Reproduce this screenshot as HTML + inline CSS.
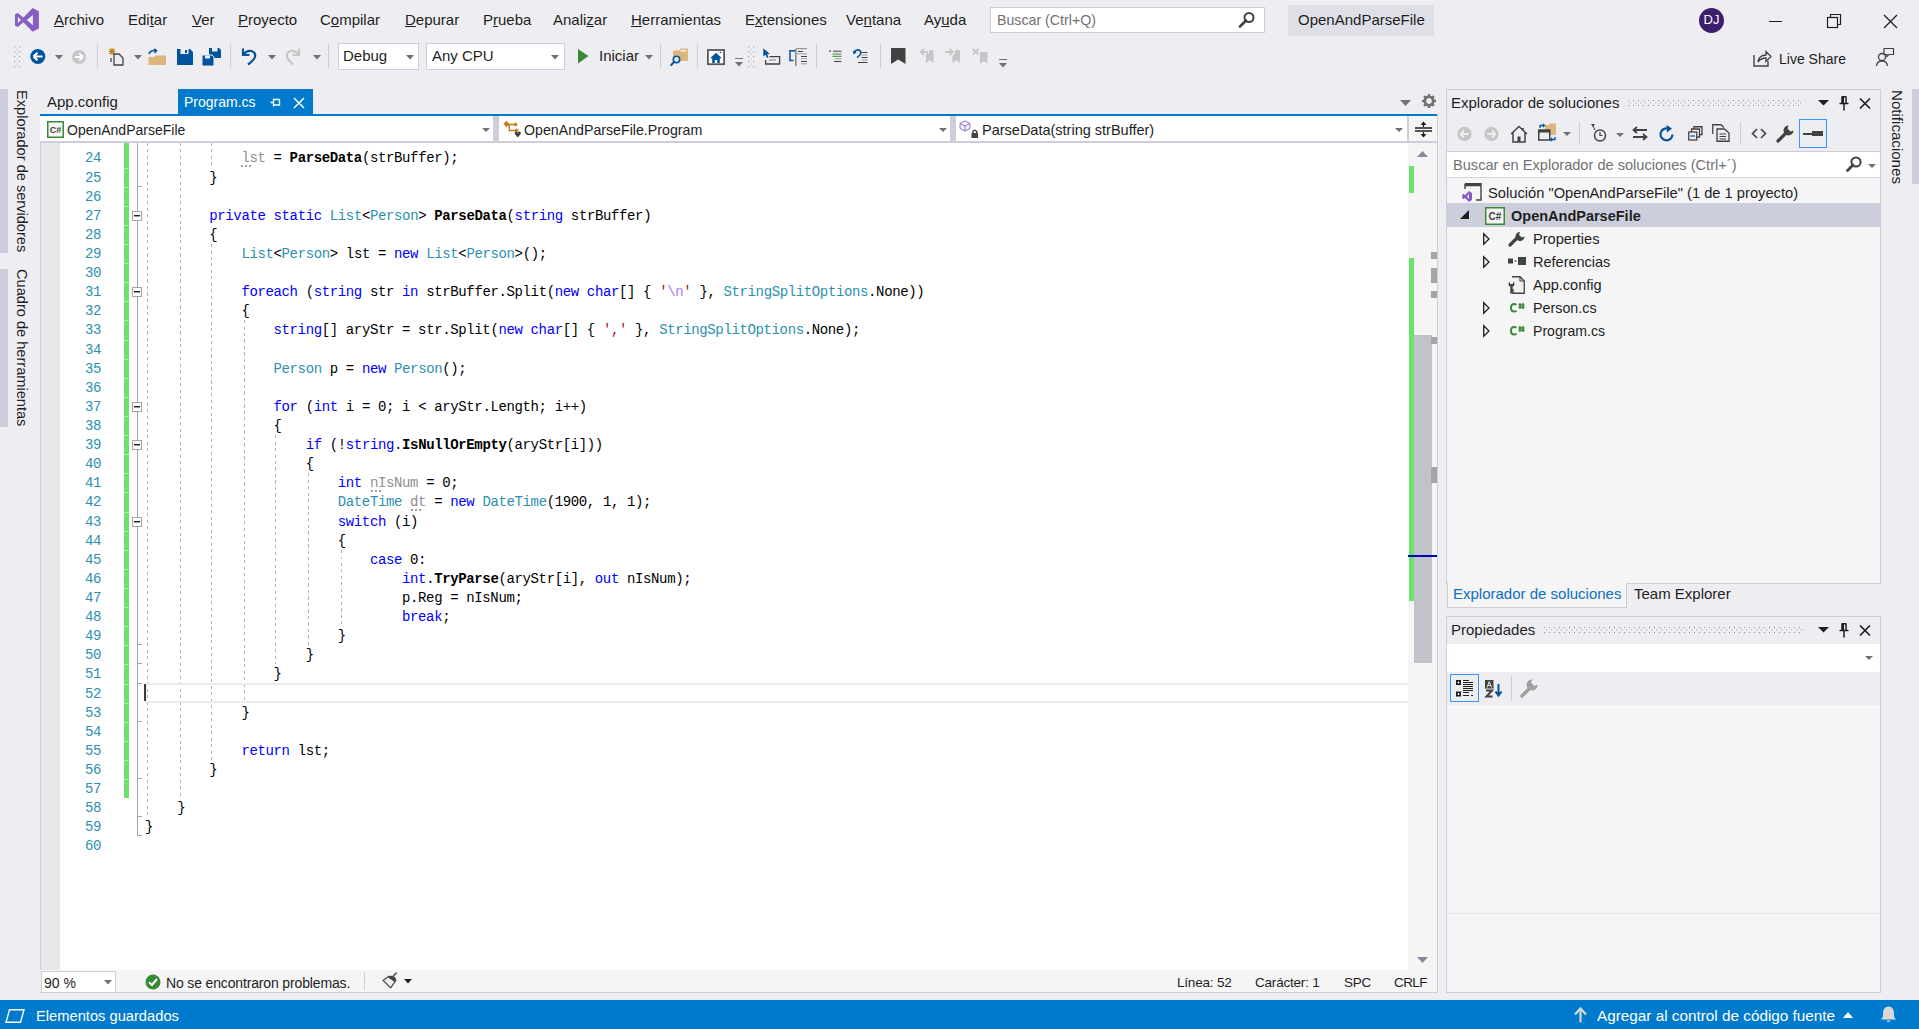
<!DOCTYPE html><html><head><meta charset="utf-8"><style>
html,body{margin:0;padding:0;}
body{width:1919px;height:1029px;overflow:hidden;position:relative;background:#EEEEF2;font-family:"Liberation Sans",sans-serif;}
.t{position:absolute;white-space:nowrap;line-height:20px;}
svg{overflow:visible}
</style></head><body>
<svg style="position:absolute;left:15px;top:8px;" width="25" height="25" viewBox="0 0 25 25"><path d="M0 6.3 L2.8 5 L8.4 9.6 L17.6 0 L23.9 3.3 L23.9 20.6 L17.6 23.7 L8.4 14.3 L2.8 19 L0 17.8 Z M2.9 8.8 L6 11.9 L2.9 15 Z M17.9 6.9 L11.8 11.9 L17.9 17.2 Z" fill="#865FC5" fill-rule="evenodd"/></svg>
<div class="t" style="left:54px;top:10px;font-size:15px;color:#1E1E1E;font-weight:normal;font-family:'Liberation Sans', sans-serif;"><span style="text-decoration:underline;text-underline-offset:1px">A</span>rchivo</div>
<div class="t" style="left:128px;top:10px;font-size:15px;color:#1E1E1E;font-weight:normal;font-family:'Liberation Sans', sans-serif;">Edi<span style="text-decoration:underline;text-underline-offset:1px">t</span>ar</div>
<div class="t" style="left:192px;top:10px;font-size:15px;color:#1E1E1E;font-weight:normal;font-family:'Liberation Sans', sans-serif;"><span style="text-decoration:underline;text-underline-offset:1px">V</span>er</div>
<div class="t" style="left:238px;top:10px;font-size:15px;color:#1E1E1E;font-weight:normal;font-family:'Liberation Sans', sans-serif;"><span style="text-decoration:underline;text-underline-offset:1px">P</span>royecto</div>
<div class="t" style="left:320px;top:10px;font-size:15px;color:#1E1E1E;font-weight:normal;font-family:'Liberation Sans', sans-serif;">C<span style="text-decoration:underline;text-underline-offset:1px">o</span>mpilar</div>
<div class="t" style="left:405px;top:10px;font-size:15px;color:#1E1E1E;font-weight:normal;font-family:'Liberation Sans', sans-serif;"><span style="text-decoration:underline;text-underline-offset:1px">D</span>epurar</div>
<div class="t" style="left:483px;top:10px;font-size:15px;color:#1E1E1E;font-weight:normal;font-family:'Liberation Sans', sans-serif;">P<span style="text-decoration:underline;text-underline-offset:1px">r</span>ueba</div>
<div class="t" style="left:553px;top:10px;font-size:15px;color:#1E1E1E;font-weight:normal;font-family:'Liberation Sans', sans-serif;">Anali<span style="text-decoration:underline;text-underline-offset:1px">z</span>ar</div>
<div class="t" style="left:631px;top:10px;font-size:15px;color:#1E1E1E;font-weight:normal;font-family:'Liberation Sans', sans-serif;"><span style="text-decoration:underline;text-underline-offset:1px">H</span>erramientas</div>
<div class="t" style="left:745px;top:10px;font-size:15px;color:#1E1E1E;font-weight:normal;font-family:'Liberation Sans', sans-serif;">E<span style="text-decoration:underline;text-underline-offset:1px">x</span>tensiones</div>
<div class="t" style="left:846px;top:10px;font-size:15px;color:#1E1E1E;font-weight:normal;font-family:'Liberation Sans', sans-serif;">Ve<span style="text-decoration:underline;text-underline-offset:1px">n</span>tana</div>
<div class="t" style="left:924px;top:10px;font-size:15px;color:#1E1E1E;font-weight:normal;font-family:'Liberation Sans', sans-serif;">Ay<span style="text-decoration:underline;text-underline-offset:1px">u</span>da</div>
<div style="position:absolute;left:990px;top:7px;width:275px;height:26px;background:#fff;border:1px solid #CCCEDB;box-sizing:border-box"></div>
<div class="t" style="left:997px;top:10px;font-size:14.2px;color:#717171;font-weight:normal;font-family:'Liberation Sans', sans-serif;">Buscar (Ctrl+Q)</div>
<svg style="position:absolute;left:1238px;top:11px;" width="18" height="18" viewBox="0 0 18 18"><circle cx="11" cy="6.5" r="4.5" fill="none" stroke="#424242" stroke-width="2"/><path d="M8 9.5 L2 15.5" stroke="#424242" stroke-width="2.6" stroke-linecap="round"/></svg>
<div style="position:absolute;left:1288px;top:5px;width:146px;height:31px;background:#DFE0E7"></div>
<div class="t" style="left:1298px;top:10px;font-size:15px;color:#1E1E1E;font-weight:normal;font-family:'Liberation Sans', sans-serif;">OpenAndParseFile</div>
<div style="position:absolute;left:1699px;top:8px;width:25px;height:25px;background:#3B1E6E;border-radius:50%"></div>
<div class="t" style="left:1702px;top:10px;font-size:13px;color:#FFFFFF;font-weight:normal;font-family:'Liberation Sans', sans-serif;width:19px;text-align:center">DJ</div>
<div style="position:absolute;left:1769px;top:21px;width:13px;height:1px;background:#1E1E1E"></div>
<svg style="position:absolute;left:1826px;top:13px;" width="16" height="16" viewBox="0 0 16 16"><rect x="1.5" y="4.5" width="10" height="10" fill="none" stroke="#1E1E1E" stroke-width="1.2"/><path d="M4.5 4.5 V1.5 H14.5 V11.5 H11.5" fill="none" stroke="#1E1E1E" stroke-width="1.2"/></svg>
<svg style="position:absolute;left:1883px;top:14px;" width="15" height="15" viewBox="0 0 15 15"><path d="M1 1 L14 14 M14 1 L1 14" stroke="#1E1E1E" stroke-width="1.3"/></svg>
<svg style="position:absolute;left:14px;top:46px;" width="7" height="22" viewBox="0 0 7 22"><rect x="0" y="0.0" width="1.2" height="1.2" fill="#A8A8B0"/><rect x="5" y="0.0" width="1.2" height="1.2" fill="#A8A8B0"/><rect x="2.5" y="2.5" width="1.2" height="1.2" fill="#C4C4CC"/><rect x="0" y="5.0" width="1.2" height="1.2" fill="#A8A8B0"/><rect x="5" y="5.0" width="1.2" height="1.2" fill="#A8A8B0"/><rect x="2.5" y="7.5" width="1.2" height="1.2" fill="#C4C4CC"/><rect x="0" y="10.0" width="1.2" height="1.2" fill="#A8A8B0"/><rect x="5" y="10.0" width="1.2" height="1.2" fill="#A8A8B0"/><rect x="2.5" y="12.5" width="1.2" height="1.2" fill="#C4C4CC"/><rect x="0" y="15.0" width="1.2" height="1.2" fill="#A8A8B0"/><rect x="5" y="15.0" width="1.2" height="1.2" fill="#A8A8B0"/><rect x="2.5" y="17.5" width="1.2" height="1.2" fill="#C4C4CC"/><rect x="0" y="20.0" width="1.2" height="1.2" fill="#A8A8B0"/><rect x="5" y="20.0" width="1.2" height="1.2" fill="#A8A8B0"/></svg>
<svg style="position:absolute;left:30px;top:49px;" width="16" height="16" viewBox="0 0 16 16"><circle cx="7.8" cy="7.5" r="7.5" fill="#00539C"/><path d="M3.5 7.5 L7.5 3.8 M3.5 7.5 L7.5 11.2 M3.8 7.5 H12.5" stroke="#fff" stroke-width="2.2" fill="none"/></svg>
<svg style="position:absolute;left:55px;top:55px;" width="8" height="5" viewBox="0 0 8 5"><path d="M0 0 H8 L4 4.5 Z" fill="#717171"/></svg>
<svg style="position:absolute;left:72px;top:50px;" width="15" height="15" viewBox="0 0 15 15"><circle cx="7" cy="7" r="7" fill="#C6C6C6"/><path d="M11 7 L7.3 3.5 M11 7 L7.3 10.5 M10.7 7 H3" stroke="#fff" stroke-width="1.8" fill="none"/></svg>
<div style="position:absolute;left:97px;top:44px;width:1px;height:24px;background:#CCCEDB"></div>
<svg style="position:absolute;left:108px;top:47px;" width="17" height="19" viewBox="0 0 17 19"><path d="M4 1 L4 8 M0.5 4.5 L7.5 4.5 M1.5 2 L6.5 7 M6.5 2 L1.5 7" stroke="#C27D1A" stroke-width="1.2"/><path d="M6 7 H11 L15 11 V18 H6 Z" fill="none" stroke="#424242" stroke-width="1.3"/><path d="M3 11 V15" stroke="#424242" stroke-width="1.3"/></svg>
<svg style="position:absolute;left:134px;top:55px;" width="8" height="5" viewBox="0 0 8 5"><path d="M0 0 H8 L4 4.5 Z" fill="#717171"/></svg>
<svg style="position:absolute;left:148px;top:49px;" width="19" height="17" viewBox="0 0 19 17"><path d="M0.5 8 H6 L7.5 6.5 H18 V16 H0.5 Z" fill="#DCB67A"/><path d="M1 5 Q2 1 8 1.5 M6 0 L8.5 1.7 L6.5 4" stroke="#00539C" stroke-width="1.6" fill="none"/></svg>
<svg style="position:absolute;left:177px;top:49px;" width="16" height="16" viewBox="0 0 16 16"><path d="M0 0 H13 L16 3 V16 H0 Z" fill="#00539C"/><rect x="3.5" y="0" width="8" height="5" fill="#EEEEF2"/><rect x="8" y="1" width="2" height="3" fill="#00539C"/></svg>
<svg style="position:absolute;left:202px;top:48px;" width="19" height="18" viewBox="0 0 19 18"><path d="M7 0 H17 L19 2 V10 H7 Z" fill="#00539C"/><rect x="10" y="0" width="5.5" height="3.5" fill="#EEEEF2"/><path d="M0 7 H10 L12 9 V18 H0 Z" fill="#00539C" stroke="#EEEEF2" stroke-width="1"/><rect x="3" y="7.5" width="5" height="3" fill="#EEEEF2"/></svg>
<div style="position:absolute;left:230px;top:44px;width:1px;height:24px;background:#CCCEDB"></div>
<svg style="position:absolute;left:241px;top:47px;" width="16" height="18" viewBox="0 0 16 18"><path d="M2 1.5 V8 H8.5" fill="none" stroke="#00539C" stroke-width="2.2"/><path d="M2.5 7.5 Q6 3 10.5 4 Q15 5.5 14 10 Q13 13 7 17.5" fill="none" stroke="#00539C" stroke-width="2.2"/></svg>
<svg style="position:absolute;left:268px;top:55px;" width="8" height="5" viewBox="0 0 8 5"><path d="M0 0 H8 L4 4.5 Z" fill="#717171"/></svg>
<svg style="position:absolute;left:285px;top:47px;" width="16" height="18" viewBox="0 0 16 18"><path d="M14 1.5 V8 H7.5" fill="none" stroke="#C6C6C6" stroke-width="2.2"/><path d="M13.5 7.5 Q10 3 5.5 4 Q1 5.5 2 10 Q3 13 8 17.5" fill="none" stroke="#C6C6C6" stroke-width="2.2"/></svg>
<svg style="position:absolute;left:313px;top:55px;" width="8" height="5" viewBox="0 0 8 5"><path d="M0 0 H8 L4 4.5 Z" fill="#717171"/></svg>
<div style="position:absolute;left:328px;top:44px;width:1px;height:24px;background:#CCCEDB"></div>
<div style="position:absolute;left:338px;top:43px;width:81px;height:27px;background:#fff;border:1px solid #CCCEDB;box-sizing:border-box"></div>
<div class="t" style="left:343px;top:46px;font-size:15px;color:#1E1E1E;font-weight:normal;font-family:'Liberation Sans', sans-serif;">Debug</div>
<svg style="position:absolute;left:406px;top:55px;" width="8" height="5" viewBox="0 0 8 5"><path d="M0 0 H8 L4 4.5 Z" fill="#717171"/></svg>
<div style="position:absolute;left:426px;top:43px;width:139px;height:27px;background:#fff;border:1px solid #CCCEDB;box-sizing:border-box"></div>
<div class="t" style="left:432px;top:46px;font-size:15px;color:#1E1E1E;font-weight:normal;font-family:'Liberation Sans', sans-serif;">Any CPU</div>
<svg style="position:absolute;left:551px;top:55px;" width="8" height="5" viewBox="0 0 8 5"><path d="M0 0 H8 L4 4.5 Z" fill="#717171"/></svg>
<svg style="position:absolute;left:578px;top:49px;" width="11" height="15" viewBox="0 0 11 15"><path d="M0 0 L10.5 7 L0 14.5 Z" fill="#388A34"/></svg>
<div class="t" style="left:599px;top:46px;font-size:15px;color:#1E1E1E;font-weight:normal;font-family:'Liberation Sans', sans-serif;">Iniciar</div>
<svg style="position:absolute;left:645px;top:55px;" width="8" height="5" viewBox="0 0 8 5"><path d="M0 0 H8 L4 4.5 Z" fill="#717171"/></svg>
<div style="position:absolute;left:660px;top:44px;width:1px;height:24px;background:#CCCEDB"></div>
<svg style="position:absolute;left:670px;top:48px;" width="19" height="18" viewBox="0 0 19 18"><path d="M3 2.5 H9.5 L10.5 0.5 H17.5 Q18 0.5 18 1.5 V13 H3 Z" fill="#DCB67A"/><rect x="10.5" y="2" width="6" height="1.5" fill="#E8F0F0"/><circle cx="6.5" cy="11.5" r="3.2" fill="#EEEEF2" stroke="#00539C" stroke-width="1.6"/><path d="M4.3 13.8 L1.2 17" stroke="#00539C" stroke-width="2" stroke-linecap="round"/></svg>
<div style="position:absolute;left:697px;top:44px;width:1px;height:24px;background:#CCCEDB"></div>
<svg style="position:absolute;left:707px;top:49px;" width="18" height="16" viewBox="0 0 18 16"><rect x="0.9" y="1" width="16.2" height="14.2" fill="#fff" stroke="#595959" stroke-width="1.8"/><path d="M3.5 8.8 L9 3.8 L14.5 8.8 L13.5 9.6 L12.8 9 V14 H10.2 V11 H7.8 V14 H5.2 V9 L4.5 9.6 Z" fill="#00539C"/><rect x="13" y="2.8" width="1.3" height="1.3" fill="#424242"/><rect x="11" y="2.8" width="1.2" height="1.2" fill="#9A9A9A"/></svg>
<svg style="position:absolute;left:735px;top:58px;" width="9" height="10" viewBox="0 0 9 10"><path d="M0 0.5 H8" stroke="#717171" stroke-width="1"/><path d="M0 4 H8 L4 8.5 Z" fill="#717171"/></svg>
<svg style="position:absolute;left:748px;top:46px;" width="7" height="22" viewBox="0 0 7 22"><rect x="0" y="0.0" width="1.2" height="1.2" fill="#A8A8B0"/><rect x="5" y="0.0" width="1.2" height="1.2" fill="#A8A8B0"/><rect x="2.5" y="2.5" width="1.2" height="1.2" fill="#C4C4CC"/><rect x="0" y="5.0" width="1.2" height="1.2" fill="#A8A8B0"/><rect x="5" y="5.0" width="1.2" height="1.2" fill="#A8A8B0"/><rect x="2.5" y="7.5" width="1.2" height="1.2" fill="#C4C4CC"/><rect x="0" y="10.0" width="1.2" height="1.2" fill="#A8A8B0"/><rect x="5" y="10.0" width="1.2" height="1.2" fill="#A8A8B0"/><rect x="2.5" y="12.5" width="1.2" height="1.2" fill="#C4C4CC"/><rect x="0" y="15.0" width="1.2" height="1.2" fill="#A8A8B0"/><rect x="5" y="15.0" width="1.2" height="1.2" fill="#A8A8B0"/><rect x="2.5" y="17.5" width="1.2" height="1.2" fill="#C4C4CC"/><rect x="0" y="20.0" width="1.2" height="1.2" fill="#A8A8B0"/><rect x="5" y="20.0" width="1.2" height="1.2" fill="#A8A8B0"/></svg>
<svg style="position:absolute;left:763px;top:48px;" width="18" height="17" viewBox="0 0 18 17"><path d="M0.3 0.3 L0.3 8.5 L2.5 6.8 L4 10 L5.5 9.3 L4.2 6.2 L6.8 6 Z" fill="#00539C"/><path d="M2.6 12 V16 H16.6 V8.6 H6.5" fill="none" stroke="#424242" stroke-width="1.3"/><path d="M6 12 H13" stroke="#808080" stroke-width="1"/></svg>
<svg style="position:absolute;left:789px;top:48px;" width="19" height="18" viewBox="0 0 19 18"><path d="M5 2.8 H1 V12.5 H4.5" fill="none" stroke="#00539C" stroke-width="1.5"/><path d="M4 2.8 H6" stroke="#00539C" stroke-width="1.5"/><path d="M6.8 1 V18" stroke="#808080" stroke-width="1.5"/><path d="M7 0.7 H18" stroke="#808080" stroke-width="1"/><path d="M9 3.5 H14 M12 8.5 H18 M12 13.5 H18" stroke="#424242" stroke-width="1"/><path d="M8 5.8 H18 M12 10.8 H18 M12 15.8 H18" stroke="#9A9A9A" stroke-width="1"/></svg>
<div style="position:absolute;left:816px;top:44px;width:1px;height:24px;background:#CCCEDB"></div>
<svg style="position:absolute;left:829px;top:49px;" width="15" height="15" viewBox="0 0 15 15"><rect x="0" y="1.5" width="2" height="1.2" fill="#424242"/><path d="M4 2.2 H12.5 M5 12.5 H12.5" stroke="#424242" stroke-width="1"/><path d="M3.5 5 H12.5 M3.5 7.3 H12.5" stroke="#388A34" stroke-width="1"/><path d="M6 9.8 H12.5" stroke="#9A9A9A" stroke-width="1"/></svg>
<svg style="position:absolute;left:853px;top:48px;" width="17" height="16" viewBox="0 0 17 16"><path d="M1 4.5 Q3 1.2 6 2 Q8.5 3 7.5 6 Q6.5 8 4 9.5" fill="none" stroke="#00539C" stroke-width="1.6"/><path d="M0 2.5 L3.5 4.5 L0.5 6.5 Z" fill="#00539C"/><path d="M8.5 4.5 H14.5 M8.5 9.5 H14.5 M5 14.5 H14.5" stroke="#424242" stroke-width="1"/><path d="M8.5 7 H14.5 M9 12 H14.5" stroke="#9A9A9A" stroke-width="1.2"/></svg>
<div style="position:absolute;left:880px;top:44px;width:1px;height:24px;background:#CCCEDB"></div>
<svg style="position:absolute;left:891px;top:48px;" width="15" height="17" viewBox="0 0 15 17"><path d="M0 0 H14.5 V16 L7.2 11.5 L0 16 Z" fill="#424242"/></svg>
<svg style="position:absolute;left:920px;top:48px;" width="16" height="17" viewBox="0 0 16 17"><path d="M6 5.5 L9 5.5 L9 2 H13.5 V15 L10 12 L6 15 Z" fill="#C6C6C6"/><path d="M0.8 4 H8 M4 0.8 L0.8 4 L4 7.2" stroke="#C6C6C6" stroke-width="1.9" fill="none"/></svg>
<svg style="position:absolute;left:945px;top:48px;" width="16" height="17" viewBox="0 0 16 17"><path d="M7.5 8 L10 5 L10 2 H15 V15 L11.5 12 L7.5 15 Z" fill="#C6C6C6"/><path d="M0 4 H7.5 M4.5 0.8 L7.7 4 L4.5 7.2" stroke="#C6C6C6" stroke-width="1.9" fill="none"/></svg>
<svg style="position:absolute;left:972px;top:48px;" width="17" height="17" viewBox="0 0 17 17"><path d="M8 4 H15.5 V16 L12 13 L8 16 Z" fill="#C6C6C6"/><path d="M0.8 1 L6.5 6.7 M6.5 1 L0.8 6.7" stroke="#C6C6C6" stroke-width="1.8"/></svg>
<svg style="position:absolute;left:999px;top:59px;" width="9" height="10" viewBox="0 0 9 10"><path d="M0 0.5 H8" stroke="#717171" stroke-width="1"/><path d="M0 4 H8 L4 8.5 Z" fill="#717171"/></svg>
<svg style="position:absolute;left:1753px;top:49px;" width="19" height="18" viewBox="0 0 19 18"><path d="M1 6 V17 H15 V12" fill="none" stroke="#424242" stroke-width="1.4"/><path d="M5 13 Q6 6 13 6 V2.5 L18 7.5 L13 12.5 V9 Q8 9 5 13 Z" fill="none" stroke="#424242" stroke-width="1.3"/></svg>
<div class="t" style="left:1779px;top:49px;font-size:14px;color:#1E1E1E;font-weight:normal;font-family:'Liberation Sans', sans-serif;">Live Share</div>
<svg style="position:absolute;left:1876px;top:48px;" width="18" height="18" viewBox="0 0 18 18"><circle cx="6" cy="9" r="3.5" fill="none" stroke="#424242" stroke-width="1.3"/><path d="M0.5 18 Q1 13 6 13 Q11 13 11.5 18" fill="none" stroke="#424242" stroke-width="1.3"/><path d="M8 0.5 H17.5 V6.5 H13 L11 8.5 V6.5 H8 Z" fill="none" stroke="#424242" stroke-width="1.2"/></svg>
<div style="position:absolute;left:0px;top:89px;width:8px;height:164px;background:#CCCEDB"></div>
<div style="position:absolute;left:0px;top:269px;width:8px;height:158px;background:#CCCEDB"></div>
<div class="t" style="left:32px;top:90px;font-size:14.6px;color:#1E1E1E;transform:rotate(90deg);transform-origin:0 0">Explorador de servidores</div>
<div class="t" style="left:32px;top:269px;font-size:14.6px;color:#1E1E1E;transform:rotate(90deg);transform-origin:0 0">Cuadro de herramientas</div>
<div style="position:absolute;left:1912px;top:89px;width:7px;height:95px;background:#CCCEDB"></div>
<div class="t" style="left:1907px;top:90px;font-size:15.1px;color:#1E1E1E;transform:rotate(90deg);transform-origin:0 0">Notificaciones</div>
<div class="t" style="left:47px;top:92px;font-size:15px;color:#1E1E1E;font-weight:normal;font-family:'Liberation Sans', sans-serif;">App.config</div>
<div style="position:absolute;left:178px;top:89px;width:135px;height:25px;background:#007ACC"></div>
<div class="t" style="left:184px;top:92px;font-size:14px;color:#FFFFFF;font-weight:normal;font-family:'Liberation Sans', sans-serif;">Program.cs</div>
<svg style="position:absolute;left:270px;top:97px;" width="11" height="11" viewBox="0 0 11 11"><path d="M0.5 5.5 H3.5 M3.5 1.5 V9.5 M3.5 2.5 H9.5 V8 H3.5" fill="none" stroke="#fff" stroke-width="1.3"/></svg>
<svg style="position:absolute;left:293px;top:97px;" width="12" height="12" viewBox="0 0 12 12"><path d="M1 1 L11 11 M11 1 L1 11" stroke="#fff" stroke-width="1.5"/></svg>
<svg style="position:absolute;left:1400px;top:100px;" width="11" height="7" viewBox="0 0 11 7"><path d="M0 0 H11 L5.5 6 Z" fill="#717171"/></svg>
<svg style="position:absolute;left:1422px;top:94px;" width="14" height="14" viewBox="0 0 14 14"><g transform="translate(7 7)"><circle r="4.2" fill="none" stroke="#717171" stroke-width="2.6"/><rect x="-1.2" y="-7" width="2.4" height="3" fill="#717171" transform="rotate(0)"/><rect x="-1.2" y="-7" width="2.4" height="3" fill="#717171" transform="rotate(45)"/><rect x="-1.2" y="-7" width="2.4" height="3" fill="#717171" transform="rotate(90)"/><rect x="-1.2" y="-7" width="2.4" height="3" fill="#717171" transform="rotate(135)"/><rect x="-1.2" y="-7" width="2.4" height="3" fill="#717171" transform="rotate(180)"/><rect x="-1.2" y="-7" width="2.4" height="3" fill="#717171" transform="rotate(225)"/><rect x="-1.2" y="-7" width="2.4" height="3" fill="#717171" transform="rotate(270)"/><rect x="-1.2" y="-7" width="2.4" height="3" fill="#717171" transform="rotate(315)"/></g></svg>
<div style="position:absolute;left:40px;top:114px;width:1397px;height:2px;background:#007ACC"></div>
<div style="position:absolute;left:40px;top:116px;width:1397px;height:27px;background:#FFFFFF"></div>
<div style="position:absolute;left:40px;top:141px;width:1397px;height:2px;background:#CCCEDB"></div>
<div style="position:absolute;left:493px;top:116px;width:6px;height:25px;background:#CCCEDB"></div>
<div style="position:absolute;left:950px;top:116px;width:6px;height:25px;background:#CCCEDB"></div>
<div style="position:absolute;left:1407px;top:116px;width:2px;height:25px;background:#CCCEDB"></div>
<div style="position:absolute;left:1409px;top:116px;width:28px;height:25px;background:#F5F5F5"></div>
<svg style="position:absolute;left:47px;top:121px;" width="17" height="17" viewBox="0 0 17 17"><rect x="0.75" y="0.75" width="15.5" height="15.5" fill="#F5F5F5" stroke="#388A34" stroke-width="1.5"/><text x="8.5" y="12" font-family="Liberation Sans" font-size="9" font-weight="bold" fill="#424242" text-anchor="middle">C#</text></svg>
<div class="t" style="left:67px;top:120px;font-size:14px;color:#1E1E1E;font-weight:normal;font-family:'Liberation Sans', sans-serif;">OpenAndParseFile</div>
<svg style="position:absolute;left:482px;top:128px;" width="8" height="4" viewBox="0 0 8 4"><path d="M0 0 H8 L4 4 Z" fill="#717171"/></svg>
<svg style="position:absolute;left:503px;top:120px;" width="19" height="19" viewBox="0 0 19 19"><path d="M0.5 4 L3.5 0.8 L6.5 4 L3.5 7.2 Z" fill="#C27D1A"/><path d="M5 4.5 H11.5 M6.3 5 V10.5 H12" stroke="#C27D1A" stroke-width="1.4" fill="none"/><path d="M10.3 4.5 L12.5 2.3 L14.7 4.5 L12.5 6.7 Z M11.3 10.5 L13.5 8.3 L15.7 10.5 L13.5 12.7 Z" fill="#C27D1A"/><path d="M14.75 17.5 L11.8 14 Q11 12 12.8 11.6 Q14 11.5 14.75 12.8 Q15.5 11.5 16.7 11.6 Q18.5 12 17.7 14 Z" fill="#424242"/></svg>
<div class="t" style="left:524px;top:120px;font-size:14.2px;color:#1E1E1E;font-weight:normal;font-family:'Liberation Sans', sans-serif;">OpenAndParseFile.Program</div>
<svg style="position:absolute;left:939px;top:128px;" width="8" height="4" viewBox="0 0 8 4"><path d="M0 0 H8 L4 4 Z" fill="#717171"/></svg>
<svg style="position:absolute;left:960px;top:120px;" width="20" height="19" viewBox="0 0 20 19"><path d="M5 1 L10 3.5 V8.5 L5 11 L0 8.5 V3.5 Z M0 3.5 L5 6 L10 3.5 M5 6 V11" fill="#F5F5F5" stroke="#865FC5" stroke-width="0.9"/><rect x="11.5" y="13" width="6.5" height="5" fill="#424242"/><path d="M12.8 13 V11.5 Q14.75 9 16.7 11.5 V13" fill="none" stroke="#424242" stroke-width="1.4"/></svg>
<div class="t" style="left:982px;top:120px;font-size:14.5px;color:#1E1E1E;font-weight:normal;font-family:'Liberation Sans', sans-serif;">ParseData(string strBuffer)</div>
<svg style="position:absolute;left:1395px;top:128px;" width="8" height="4" viewBox="0 0 8 4"><path d="M0 0 H8 L4 4 Z" fill="#717171"/></svg>
<svg style="position:absolute;left:1415px;top:121px;" width="17" height="17" viewBox="0 0 17 17"><path d="M0 7 H17 M0 10 H17" stroke="#1E1E1E" stroke-width="1.3"/><path d="M8.5 1 V6 M8.5 11 V16" stroke="#1E1E1E" stroke-width="1.2"/><path d="M5.5 4 L8.5 0.5 L11.5 4 Z M5.5 13 L8.5 16.5 L11.5 13 Z" fill="#1E1E1E"/></svg>
<div style="position:absolute;left:40px;top:143px;width:1px;height:827px;background:#CCCEDB"></div>
<div style="position:absolute;left:41px;top:143px;width:19px;height:827px;background:#E6E7E8"></div>
<div style="position:absolute;left:60px;top:143px;width:1348px;height:827px;background:#FFFFFF"></div>
<div class="t" style="left:40px;width:61px;text-align:right;top:148px;font-family:'Liberation Mono', monospace;font-size:14px;letter-spacing:-0.4px;color:#2B91AF">24</div>
<div class="t" style="left:40px;width:61px;text-align:right;top:168px;font-family:'Liberation Mono', monospace;font-size:14px;letter-spacing:-0.4px;color:#2B91AF">25</div>
<div class="t" style="left:40px;width:61px;text-align:right;top:187px;font-family:'Liberation Mono', monospace;font-size:14px;letter-spacing:-0.4px;color:#2B91AF">26</div>
<div class="t" style="left:40px;width:61px;text-align:right;top:206px;font-family:'Liberation Mono', monospace;font-size:14px;letter-spacing:-0.4px;color:#2B91AF">27</div>
<div class="t" style="left:40px;width:61px;text-align:right;top:225px;font-family:'Liberation Mono', monospace;font-size:14px;letter-spacing:-0.4px;color:#2B91AF">28</div>
<div class="t" style="left:40px;width:61px;text-align:right;top:244px;font-family:'Liberation Mono', monospace;font-size:14px;letter-spacing:-0.4px;color:#2B91AF">29</div>
<div class="t" style="left:40px;width:61px;text-align:right;top:263px;font-family:'Liberation Mono', monospace;font-size:14px;letter-spacing:-0.4px;color:#2B91AF">30</div>
<div class="t" style="left:40px;width:61px;text-align:right;top:282px;font-family:'Liberation Mono', monospace;font-size:14px;letter-spacing:-0.4px;color:#2B91AF">31</div>
<div class="t" style="left:40px;width:61px;text-align:right;top:301px;font-family:'Liberation Mono', monospace;font-size:14px;letter-spacing:-0.4px;color:#2B91AF">32</div>
<div class="t" style="left:40px;width:61px;text-align:right;top:320px;font-family:'Liberation Mono', monospace;font-size:14px;letter-spacing:-0.4px;color:#2B91AF">33</div>
<div class="t" style="left:40px;width:61px;text-align:right;top:340px;font-family:'Liberation Mono', monospace;font-size:14px;letter-spacing:-0.4px;color:#2B91AF">34</div>
<div class="t" style="left:40px;width:61px;text-align:right;top:359px;font-family:'Liberation Mono', monospace;font-size:14px;letter-spacing:-0.4px;color:#2B91AF">35</div>
<div class="t" style="left:40px;width:61px;text-align:right;top:378px;font-family:'Liberation Mono', monospace;font-size:14px;letter-spacing:-0.4px;color:#2B91AF">36</div>
<div class="t" style="left:40px;width:61px;text-align:right;top:397px;font-family:'Liberation Mono', monospace;font-size:14px;letter-spacing:-0.4px;color:#2B91AF">37</div>
<div class="t" style="left:40px;width:61px;text-align:right;top:416px;font-family:'Liberation Mono', monospace;font-size:14px;letter-spacing:-0.4px;color:#2B91AF">38</div>
<div class="t" style="left:40px;width:61px;text-align:right;top:435px;font-family:'Liberation Mono', monospace;font-size:14px;letter-spacing:-0.4px;color:#2B91AF">39</div>
<div class="t" style="left:40px;width:61px;text-align:right;top:454px;font-family:'Liberation Mono', monospace;font-size:14px;letter-spacing:-0.4px;color:#2B91AF">40</div>
<div class="t" style="left:40px;width:61px;text-align:right;top:473px;font-family:'Liberation Mono', monospace;font-size:14px;letter-spacing:-0.4px;color:#2B91AF">41</div>
<div class="t" style="left:40px;width:61px;text-align:right;top:492px;font-family:'Liberation Mono', monospace;font-size:14px;letter-spacing:-0.4px;color:#2B91AF">42</div>
<div class="t" style="left:40px;width:61px;text-align:right;top:512px;font-family:'Liberation Mono', monospace;font-size:14px;letter-spacing:-0.4px;color:#2B91AF">43</div>
<div class="t" style="left:40px;width:61px;text-align:right;top:531px;font-family:'Liberation Mono', monospace;font-size:14px;letter-spacing:-0.4px;color:#2B91AF">44</div>
<div class="t" style="left:40px;width:61px;text-align:right;top:550px;font-family:'Liberation Mono', monospace;font-size:14px;letter-spacing:-0.4px;color:#2B91AF">45</div>
<div class="t" style="left:40px;width:61px;text-align:right;top:569px;font-family:'Liberation Mono', monospace;font-size:14px;letter-spacing:-0.4px;color:#2B91AF">46</div>
<div class="t" style="left:40px;width:61px;text-align:right;top:588px;font-family:'Liberation Mono', monospace;font-size:14px;letter-spacing:-0.4px;color:#2B91AF">47</div>
<div class="t" style="left:40px;width:61px;text-align:right;top:607px;font-family:'Liberation Mono', monospace;font-size:14px;letter-spacing:-0.4px;color:#2B91AF">48</div>
<div class="t" style="left:40px;width:61px;text-align:right;top:626px;font-family:'Liberation Mono', monospace;font-size:14px;letter-spacing:-0.4px;color:#2B91AF">49</div>
<div class="t" style="left:40px;width:61px;text-align:right;top:645px;font-family:'Liberation Mono', monospace;font-size:14px;letter-spacing:-0.4px;color:#2B91AF">50</div>
<div class="t" style="left:40px;width:61px;text-align:right;top:664px;font-family:'Liberation Mono', monospace;font-size:14px;letter-spacing:-0.4px;color:#2B91AF">51</div>
<div class="t" style="left:40px;width:61px;text-align:right;top:684px;font-family:'Liberation Mono', monospace;font-size:14px;letter-spacing:-0.4px;color:#2B91AF">52</div>
<div class="t" style="left:40px;width:61px;text-align:right;top:703px;font-family:'Liberation Mono', monospace;font-size:14px;letter-spacing:-0.4px;color:#2B91AF">53</div>
<div class="t" style="left:40px;width:61px;text-align:right;top:722px;font-family:'Liberation Mono', monospace;font-size:14px;letter-spacing:-0.4px;color:#2B91AF">54</div>
<div class="t" style="left:40px;width:61px;text-align:right;top:741px;font-family:'Liberation Mono', monospace;font-size:14px;letter-spacing:-0.4px;color:#2B91AF">55</div>
<div class="t" style="left:40px;width:61px;text-align:right;top:760px;font-family:'Liberation Mono', monospace;font-size:14px;letter-spacing:-0.4px;color:#2B91AF">56</div>
<div class="t" style="left:40px;width:61px;text-align:right;top:779px;font-family:'Liberation Mono', monospace;font-size:14px;letter-spacing:-0.4px;color:#2B91AF">57</div>
<div class="t" style="left:40px;width:61px;text-align:right;top:798px;font-family:'Liberation Mono', monospace;font-size:14px;letter-spacing:-0.4px;color:#2B91AF">58</div>
<div class="t" style="left:40px;width:61px;text-align:right;top:817px;font-family:'Liberation Mono', monospace;font-size:14px;letter-spacing:-0.4px;color:#2B91AF">59</div>
<div class="t" style="left:40px;width:61px;text-align:right;top:836px;font-family:'Liberation Mono', monospace;font-size:14px;letter-spacing:-0.4px;color:#2B91AF">60</div>
<div style="position:absolute;left:124px;top:143px;width:5px;height:655px;background:#6CE26C"></div>
<div style="position:absolute;left:124px;top:168px;width:5px;height:1px;background:#A9EEA9"></div>
<div style="position:absolute;left:124px;top:187px;width:5px;height:1px;background:#A9EEA9"></div>
<div style="position:absolute;left:124px;top:206px;width:5px;height:1px;background:#A9EEA9"></div>
<div style="position:absolute;left:124px;top:225px;width:5px;height:1px;background:#A9EEA9"></div>
<div style="position:absolute;left:124px;top:244px;width:5px;height:1px;background:#A9EEA9"></div>
<div style="position:absolute;left:124px;top:263px;width:5px;height:1px;background:#A9EEA9"></div>
<div style="position:absolute;left:124px;top:282px;width:5px;height:1px;background:#A9EEA9"></div>
<div style="position:absolute;left:124px;top:301px;width:5px;height:1px;background:#A9EEA9"></div>
<div style="position:absolute;left:124px;top:320px;width:5px;height:1px;background:#A9EEA9"></div>
<div style="position:absolute;left:124px;top:340px;width:5px;height:1px;background:#A9EEA9"></div>
<div style="position:absolute;left:124px;top:359px;width:5px;height:1px;background:#A9EEA9"></div>
<div style="position:absolute;left:124px;top:378px;width:5px;height:1px;background:#A9EEA9"></div>
<div style="position:absolute;left:124px;top:397px;width:5px;height:1px;background:#A9EEA9"></div>
<div style="position:absolute;left:124px;top:416px;width:5px;height:1px;background:#A9EEA9"></div>
<div style="position:absolute;left:124px;top:435px;width:5px;height:1px;background:#A9EEA9"></div>
<div style="position:absolute;left:124px;top:454px;width:5px;height:1px;background:#A9EEA9"></div>
<div style="position:absolute;left:124px;top:473px;width:5px;height:1px;background:#A9EEA9"></div>
<div style="position:absolute;left:124px;top:492px;width:5px;height:1px;background:#A9EEA9"></div>
<div style="position:absolute;left:124px;top:512px;width:5px;height:1px;background:#A9EEA9"></div>
<div style="position:absolute;left:124px;top:531px;width:5px;height:1px;background:#A9EEA9"></div>
<div style="position:absolute;left:124px;top:550px;width:5px;height:1px;background:#A9EEA9"></div>
<div style="position:absolute;left:124px;top:569px;width:5px;height:1px;background:#A9EEA9"></div>
<div style="position:absolute;left:124px;top:588px;width:5px;height:1px;background:#A9EEA9"></div>
<div style="position:absolute;left:124px;top:607px;width:5px;height:1px;background:#A9EEA9"></div>
<div style="position:absolute;left:124px;top:626px;width:5px;height:1px;background:#A9EEA9"></div>
<div style="position:absolute;left:124px;top:645px;width:5px;height:1px;background:#A9EEA9"></div>
<div style="position:absolute;left:124px;top:664px;width:5px;height:1px;background:#A9EEA9"></div>
<div style="position:absolute;left:124px;top:684px;width:5px;height:1px;background:#A9EEA9"></div>
<div style="position:absolute;left:124px;top:703px;width:5px;height:1px;background:#A9EEA9"></div>
<div style="position:absolute;left:124px;top:722px;width:5px;height:1px;background:#A9EEA9"></div>
<div style="position:absolute;left:124px;top:741px;width:5px;height:1px;background:#A9EEA9"></div>
<div style="position:absolute;left:124px;top:760px;width:5px;height:1px;background:#A9EEA9"></div>
<div style="position:absolute;left:124px;top:779px;width:5px;height:1px;background:#A9EEA9"></div>
<div style="position:absolute;left:137px;top:143px;width:1px;height:693px;background:#A5A5A5"></div>
<div style="position:absolute;left:137px;top:186px;width:5px;height:1px;background:#A5A5A5"></div>
<div style="position:absolute;left:137px;top:644px;width:5px;height:1px;background:#A5A5A5"></div>
<div style="position:absolute;left:137px;top:663px;width:5px;height:1px;background:#A5A5A5"></div>
<div style="position:absolute;left:137px;top:683px;width:5px;height:1px;background:#A5A5A5"></div>
<div style="position:absolute;left:137px;top:721px;width:5px;height:1px;background:#A5A5A5"></div>
<div style="position:absolute;left:137px;top:778px;width:5px;height:1px;background:#A5A5A5"></div>
<div style="position:absolute;left:137px;top:816px;width:5px;height:1px;background:#A5A5A5"></div>
<div style="position:absolute;left:137px;top:835px;width:5px;height:1px;background:#A5A5A5"></div>
<div style="position:absolute;left:132px;top:211px;width:10px;height:10px;background:#fff;border:1px solid #A5A5A5;box-sizing:border-box"></div>
<div style="position:absolute;left:134px;top:215px;width:6px;height:1px;background:#1E1E1E"></div>
<div style="position:absolute;left:134px;top:216px;width:6px;height:1px;background:#9A9A9A"></div>
<div style="position:absolute;left:132px;top:287px;width:10px;height:10px;background:#fff;border:1px solid #A5A5A5;box-sizing:border-box"></div>
<div style="position:absolute;left:134px;top:291px;width:6px;height:1px;background:#1E1E1E"></div>
<div style="position:absolute;left:134px;top:292px;width:6px;height:1px;background:#9A9A9A"></div>
<div style="position:absolute;left:132px;top:402px;width:10px;height:10px;background:#fff;border:1px solid #A5A5A5;box-sizing:border-box"></div>
<div style="position:absolute;left:134px;top:406px;width:6px;height:1px;background:#1E1E1E"></div>
<div style="position:absolute;left:134px;top:407px;width:6px;height:1px;background:#9A9A9A"></div>
<div style="position:absolute;left:132px;top:440px;width:10px;height:10px;background:#fff;border:1px solid #A5A5A5;box-sizing:border-box"></div>
<div style="position:absolute;left:134px;top:444px;width:6px;height:1px;background:#1E1E1E"></div>
<div style="position:absolute;left:134px;top:445px;width:6px;height:1px;background:#9A9A9A"></div>
<div style="position:absolute;left:132px;top:517px;width:10px;height:10px;background:#fff;border:1px solid #A5A5A5;box-sizing:border-box"></div>
<div style="position:absolute;left:134px;top:521px;width:6px;height:1px;background:#1E1E1E"></div>
<div style="position:absolute;left:134px;top:522px;width:6px;height:1px;background:#9A9A9A"></div>
<div style="position:absolute;left:147px;top:143px;width:1px;height:674px;background:repeating-linear-gradient(to bottom,#B4B4B4 0 3px,transparent 3px 6.5px)"></div>
<div style="position:absolute;left:180px;top:143px;width:1px;height:655px;background:repeating-linear-gradient(to bottom,#B4B4B4 0 3px,transparent 3px 6.5px)"></div>
<div style="position:absolute;left:211px;top:143px;width:1px;height:25px;background:repeating-linear-gradient(to bottom,#B4B4B4 0 3px,transparent 3px 6.5px)"></div>
<div style="position:absolute;left:211px;top:244px;width:1px;height:516px;background:repeating-linear-gradient(to bottom,#B4B4B4 0 3px,transparent 3px 6.5px)"></div>
<div style="position:absolute;left:244px;top:320px;width:1px;height:383px;background:repeating-linear-gradient(to bottom,#B4B4B4 0 3px,transparent 3px 6.5px)"></div>
<div style="position:absolute;left:275px;top:435px;width:1px;height:229px;background:repeating-linear-gradient(to bottom,#B4B4B4 0 3px,transparent 3px 6.5px)"></div>
<div style="position:absolute;left:308px;top:473px;width:1px;height:172px;background:repeating-linear-gradient(to bottom,#B4B4B4 0 3px,transparent 3px 6.5px)"></div>
<div style="position:absolute;left:341px;top:550px;width:1px;height:76px;background:repeating-linear-gradient(to bottom,#B4B4B4 0 3px,transparent 3px 6.5px)"></div>
<div style="position:absolute;left:145px;top:683px;width:1263px;height:20px;border:2px solid #EAEAF2;border-right:none;box-sizing:border-box"></div>
<div style="position:absolute;left:144px;top:684px;width:2px;height:17px;background:#3C3C3C"></div>
<div class="t" style="left:145px;top:148px;font-family:'Liberation Mono', monospace;font-size:14px;letter-spacing:-0.37px;color:#000;white-space:pre">            <span style="color:#8F8F8F">lst</span> = <b>ParseData</b>(strBuffer);</div>
<div class="t" style="left:145px;top:168px;font-family:'Liberation Mono', monospace;font-size:14px;letter-spacing:-0.37px;color:#000;white-space:pre">        }</div>
<div class="t" style="left:145px;top:206px;font-family:'Liberation Mono', monospace;font-size:14px;letter-spacing:-0.37px;color:#000;white-space:pre">        <span style="color:#0000FF">private</span> <span style="color:#0000FF">static</span> <span style="color:#2B91AF">List</span>&lt;<span style="color:#2B91AF">Person</span>&gt; <b>ParseData</b>(<span style="color:#0000FF">string</span> strBuffer)</div>
<div class="t" style="left:145px;top:225px;font-family:'Liberation Mono', monospace;font-size:14px;letter-spacing:-0.37px;color:#000;white-space:pre">        {</div>
<div class="t" style="left:145px;top:244px;font-family:'Liberation Mono', monospace;font-size:14px;letter-spacing:-0.37px;color:#000;white-space:pre">            <span style="color:#2B91AF">List</span>&lt;<span style="color:#2B91AF">Person</span>&gt; lst = <span style="color:#0000FF">new</span> <span style="color:#2B91AF">List</span>&lt;<span style="color:#2B91AF">Person</span>&gt;();</div>
<div class="t" style="left:145px;top:282px;font-family:'Liberation Mono', monospace;font-size:14px;letter-spacing:-0.37px;color:#000;white-space:pre">            <span style="color:#0000FF">foreach</span> (<span style="color:#0000FF">string</span> str <span style="color:#0000FF">in</span> strBuffer.Split(<span style="color:#0000FF">new</span> <span style="color:#0000FF">char</span>[] { <span style="color:#A31515">&#x27;</span><span style="color:#B776FB">\n</span><span style="color:#A31515">&#x27;</span> }, <span style="color:#2B91AF">StringSplitOptions</span>.None))</div>
<div class="t" style="left:145px;top:301px;font-family:'Liberation Mono', monospace;font-size:14px;letter-spacing:-0.37px;color:#000;white-space:pre">            {</div>
<div class="t" style="left:145px;top:320px;font-family:'Liberation Mono', monospace;font-size:14px;letter-spacing:-0.37px;color:#000;white-space:pre">                <span style="color:#0000FF">string</span>[] aryStr = str.Split(<span style="color:#0000FF">new</span> <span style="color:#0000FF">char</span>[] { <span style="color:#A31515">&#x27;,&#x27;</span> }, <span style="color:#2B91AF">StringSplitOptions</span>.None);</div>
<div class="t" style="left:145px;top:359px;font-family:'Liberation Mono', monospace;font-size:14px;letter-spacing:-0.37px;color:#000;white-space:pre">                <span style="color:#2B91AF">Person</span> p = <span style="color:#0000FF">new</span> <span style="color:#2B91AF">Person</span>();</div>
<div class="t" style="left:145px;top:397px;font-family:'Liberation Mono', monospace;font-size:14px;letter-spacing:-0.37px;color:#000;white-space:pre">                <span style="color:#0000FF">for</span> (<span style="color:#0000FF">int</span> i = 0; i &lt; aryStr.Length; i++)</div>
<div class="t" style="left:145px;top:416px;font-family:'Liberation Mono', monospace;font-size:14px;letter-spacing:-0.37px;color:#000;white-space:pre">                {</div>
<div class="t" style="left:145px;top:435px;font-family:'Liberation Mono', monospace;font-size:14px;letter-spacing:-0.37px;color:#000;white-space:pre">                    <span style="color:#0000FF">if</span> (!<span style="color:#0000FF">string</span>.<b>IsNullOrEmpty</b>(aryStr[i]))</div>
<div class="t" style="left:145px;top:454px;font-family:'Liberation Mono', monospace;font-size:14px;letter-spacing:-0.37px;color:#000;white-space:pre">                    {</div>
<div class="t" style="left:145px;top:473px;font-family:'Liberation Mono', monospace;font-size:14px;letter-spacing:-0.37px;color:#000;white-space:pre">                        <span style="color:#0000FF">int</span> <span style="color:#8F8F8F">nIsNum</span> = 0;</div>
<div class="t" style="left:145px;top:492px;font-family:'Liberation Mono', monospace;font-size:14px;letter-spacing:-0.37px;color:#000;white-space:pre">                        <span style="color:#2B91AF">DateTime</span> <span style="color:#8F8F8F">dt</span> = <span style="color:#0000FF">new</span> <span style="color:#2B91AF">DateTime</span>(1900, 1, 1);</div>
<div class="t" style="left:145px;top:512px;font-family:'Liberation Mono', monospace;font-size:14px;letter-spacing:-0.37px;color:#000;white-space:pre">                        <span style="color:#0000FF">switch</span> (i)</div>
<div class="t" style="left:145px;top:531px;font-family:'Liberation Mono', monospace;font-size:14px;letter-spacing:-0.37px;color:#000;white-space:pre">                        {</div>
<div class="t" style="left:145px;top:550px;font-family:'Liberation Mono', monospace;font-size:14px;letter-spacing:-0.37px;color:#000;white-space:pre">                            <span style="color:#0000FF">case</span> 0:</div>
<div class="t" style="left:145px;top:569px;font-family:'Liberation Mono', monospace;font-size:14px;letter-spacing:-0.37px;color:#000;white-space:pre">                                <span style="color:#0000FF">int</span>.<b>TryParse</b>(aryStr[i], <span style="color:#0000FF">out</span> nIsNum);</div>
<div class="t" style="left:145px;top:588px;font-family:'Liberation Mono', monospace;font-size:14px;letter-spacing:-0.37px;color:#000;white-space:pre">                                p.Reg = nIsNum;</div>
<div class="t" style="left:145px;top:607px;font-family:'Liberation Mono', monospace;font-size:14px;letter-spacing:-0.37px;color:#000;white-space:pre">                                <span style="color:#0000FF">break</span>;</div>
<div class="t" style="left:145px;top:626px;font-family:'Liberation Mono', monospace;font-size:14px;letter-spacing:-0.37px;color:#000;white-space:pre">                        }</div>
<div class="t" style="left:145px;top:645px;font-family:'Liberation Mono', monospace;font-size:14px;letter-spacing:-0.37px;color:#000;white-space:pre">                    }</div>
<div class="t" style="left:145px;top:664px;font-family:'Liberation Mono', monospace;font-size:14px;letter-spacing:-0.37px;color:#000;white-space:pre">                }</div>
<div class="t" style="left:145px;top:703px;font-family:'Liberation Mono', monospace;font-size:14px;letter-spacing:-0.37px;color:#000;white-space:pre">            }</div>
<div class="t" style="left:145px;top:741px;font-family:'Liberation Mono', monospace;font-size:14px;letter-spacing:-0.37px;color:#000;white-space:pre">            <span style="color:#0000FF">return</span> lst;</div>
<div class="t" style="left:145px;top:760px;font-family:'Liberation Mono', monospace;font-size:14px;letter-spacing:-0.37px;color:#000;white-space:pre">        }</div>
<div class="t" style="left:145px;top:798px;font-family:'Liberation Mono', monospace;font-size:14px;letter-spacing:-0.37px;color:#000;white-space:pre">    }</div>
<div class="t" style="left:145px;top:817px;font-family:'Liberation Mono', monospace;font-size:14px;letter-spacing:-0.37px;color:#000;white-space:pre">}</div>
<div style="position:absolute;left:241px;top:165px;width:2px;height:2px;background:#A0A0A0"></div>
<div style="position:absolute;left:245px;top:165px;width:2px;height:2px;background:#A0A0A0"></div>
<div style="position:absolute;left:249px;top:165px;width:2px;height:2px;background:#A0A0A0"></div>
<div style="position:absolute;left:371px;top:490px;width:2px;height:2px;background:#A0A0A0"></div>
<div style="position:absolute;left:375px;top:490px;width:2px;height:2px;background:#A0A0A0"></div>
<div style="position:absolute;left:379px;top:490px;width:2px;height:2px;background:#A0A0A0"></div>
<div style="position:absolute;left:411px;top:509px;width:2px;height:2px;background:#A0A0A0"></div>
<div style="position:absolute;left:415px;top:509px;width:2px;height:2px;background:#A0A0A0"></div>
<div style="position:absolute;left:419px;top:509px;width:2px;height:2px;background:#A0A0A0"></div>
<div style="position:absolute;left:1408px;top:143px;width:29px;height:827px;background:#F5F5F5"></div>
<div style="position:absolute;left:1437px;top:114px;width:1px;height:879px;background:#CCCEDB"></div>
<svg style="position:absolute;left:1417px;top:151px;" width="11" height="6" viewBox="0 0 11 6"><path d="M0 6 L5.5 0 L11 6 Z" fill="#868999"/></svg>
<svg style="position:absolute;left:1417px;top:957px;" width="11" height="6" viewBox="0 0 11 6"><path d="M0 0 L11 0 L5.5 6 Z" fill="#868999"/></svg>
<div style="position:absolute;left:1414px;top:335px;width:18px;height:328px;background:#C2C3C9"></div>
<div style="position:absolute;left:1409px;top:166px;width:5px;height:27px;background:#6CE26C"></div>
<div style="position:absolute;left:1409px;top:258px;width:5px;height:343px;background:#6CE26C"></div>
<div style="position:absolute;left:1431px;top:252px;width:6px;height:7px;background:#A5A5A5"></div>
<div style="position:absolute;left:1431px;top:268px;width:6px;height:15px;background:#A5A5A5"></div>
<div style="position:absolute;left:1431px;top:291px;width:6px;height:7px;background:#A5A5A5"></div>
<div style="position:absolute;left:1431px;top:337px;width:6px;height:7px;background:#A5A5A5"></div>
<div style="position:absolute;left:1431px;top:467px;width:6px;height:16px;background:#A5A5A5"></div>
<div style="position:absolute;left:1408px;top:555px;width:29px;height:2px;background:#0000C0"></div>
<div style="position:absolute;left:41px;top:970px;width:1396px;height:23px;background:#F5F5F5"></div>
<div style="position:absolute;left:40px;top:992px;width:1398px;height:1px;background:#CCCEDB"></div>
<div style="position:absolute;left:41px;top:971px;width:75px;height:22px;background:#fff;border:1px solid #CCCEDB;box-sizing:border-box"></div>
<div class="t" style="left:44px;top:973px;font-size:14px;color:#1E1E1E;font-weight:normal;font-family:'Liberation Sans', sans-serif;">90 %</div>
<svg style="position:absolute;left:104px;top:980px;" width="8" height="5" viewBox="0 0 8 5"><path d="M0 0 H8 L4 4.5 Z" fill="#717171"/></svg>
<svg style="position:absolute;left:145px;top:974px;" width="16" height="16" viewBox="0 0 16 16"><circle cx="8" cy="8" r="7.5" fill="#388A34"/><path d="M4 8.2 L7 11 L12 5" stroke="#fff" stroke-width="2" fill="none"/></svg>
<div class="t" style="left:166px;top:973px;font-size:14px;color:#1E1E1E;font-weight:normal;font-family:'Liberation Sans', sans-serif;letter-spacing:-0.15px">No se encontraron problemas.</div>
<div style="position:absolute;left:364px;top:973px;width:1px;height:17px;background:#CCCEDB"></div>
<svg style="position:absolute;left:382px;top:972px;" width="16" height="17" viewBox="0 0 16 17"><path d="M1.1 8.4 L7 4.3 L13.8 8.3 L8.7 15.8 Z" fill="#F0F0F0" stroke="#5A5A5A" stroke-width="1.4" stroke-linejoin="round"/><path d="M5.8 5.2 Q9.5 2.5 12.5 4.8 Q14.5 6.5 13.8 8.6 L12.8 10 Z" fill="#424242"/><path d="M11.3 3.8 L14.8 0.6" stroke="#5A5A5A" stroke-width="1.6"/></svg>
<svg style="position:absolute;left:404px;top:979px;" width="8" height="5" viewBox="0 0 8 5"><path d="M0 0 H8 L4 4.5 Z" fill="#1E1E1E"/></svg>
<div class="t" style="left:1177px;top:973px;font-size:13.5px;color:#1E1E1E;font-weight:normal;font-family:'Liberation Sans', sans-serif;letter-spacing:-0.2px">Línea: 52</div>
<div class="t" style="left:1255px;top:973px;font-size:13.5px;color:#1E1E1E;font-weight:normal;font-family:'Liberation Sans', sans-serif;letter-spacing:-0.2px">Carácter: 1</div>
<div class="t" style="left:1344px;top:973px;font-size:13.5px;color:#1E1E1E;font-weight:normal;font-family:'Liberation Sans', sans-serif;letter-spacing:-0.2px">SPC</div>
<div class="t" style="left:1394px;top:973px;font-size:13.5px;color:#1E1E1E;font-weight:normal;font-family:'Liberation Sans', sans-serif;letter-spacing:-0.6px">CRLF</div>
<div style="position:absolute;left:1446px;top:89px;width:435px;height:495px;border:1px solid #CCCEDB;box-sizing:border-box;background:#EEEEF2"></div>
<div class="t" style="left:1451px;top:93px;font-size:15px;color:#1E1E1E;font-weight:normal;font-family:'Liberation Sans', sans-serif;">Explorador de soluciones</div>
<svg style="position:absolute;left:1628px;top:100px;" width="179" height="6" viewBox="0 0 179 6"><rect x="0" y="0" width="1" height="1" fill="#8E8E96"/><rect x="0" y="5" width="1" height="1" fill="#8E8E96"/><rect x="2" y="2" width="1.2" height="1.5" fill="#C0C0C8"/><rect x="5" y="0" width="1" height="1" fill="#8E8E96"/><rect x="5" y="5" width="1" height="1" fill="#8E8E96"/><rect x="7" y="2" width="1.2" height="1.5" fill="#C0C0C8"/><rect x="10" y="0" width="1" height="1" fill="#8E8E96"/><rect x="10" y="5" width="1" height="1" fill="#8E8E96"/><rect x="12" y="2" width="1.2" height="1.5" fill="#C0C0C8"/><rect x="15" y="0" width="1" height="1" fill="#8E8E96"/><rect x="15" y="5" width="1" height="1" fill="#8E8E96"/><rect x="17" y="2" width="1.2" height="1.5" fill="#C0C0C8"/><rect x="20" y="0" width="1" height="1" fill="#8E8E96"/><rect x="20" y="5" width="1" height="1" fill="#8E8E96"/><rect x="22" y="2" width="1.2" height="1.5" fill="#C0C0C8"/><rect x="25" y="0" width="1" height="1" fill="#8E8E96"/><rect x="25" y="5" width="1" height="1" fill="#8E8E96"/><rect x="27" y="2" width="1.2" height="1.5" fill="#C0C0C8"/><rect x="30" y="0" width="1" height="1" fill="#8E8E96"/><rect x="30" y="5" width="1" height="1" fill="#8E8E96"/><rect x="32" y="2" width="1.2" height="1.5" fill="#C0C0C8"/><rect x="35" y="0" width="1" height="1" fill="#8E8E96"/><rect x="35" y="5" width="1" height="1" fill="#8E8E96"/><rect x="37" y="2" width="1.2" height="1.5" fill="#C0C0C8"/><rect x="40" y="0" width="1" height="1" fill="#8E8E96"/><rect x="40" y="5" width="1" height="1" fill="#8E8E96"/><rect x="42" y="2" width="1.2" height="1.5" fill="#C0C0C8"/><rect x="45" y="0" width="1" height="1" fill="#8E8E96"/><rect x="45" y="5" width="1" height="1" fill="#8E8E96"/><rect x="47" y="2" width="1.2" height="1.5" fill="#C0C0C8"/><rect x="50" y="0" width="1" height="1" fill="#8E8E96"/><rect x="50" y="5" width="1" height="1" fill="#8E8E96"/><rect x="52" y="2" width="1.2" height="1.5" fill="#C0C0C8"/><rect x="55" y="0" width="1" height="1" fill="#8E8E96"/><rect x="55" y="5" width="1" height="1" fill="#8E8E96"/><rect x="57" y="2" width="1.2" height="1.5" fill="#C0C0C8"/><rect x="60" y="0" width="1" height="1" fill="#8E8E96"/><rect x="60" y="5" width="1" height="1" fill="#8E8E96"/><rect x="62" y="2" width="1.2" height="1.5" fill="#C0C0C8"/><rect x="65" y="0" width="1" height="1" fill="#8E8E96"/><rect x="65" y="5" width="1" height="1" fill="#8E8E96"/><rect x="67" y="2" width="1.2" height="1.5" fill="#C0C0C8"/><rect x="70" y="0" width="1" height="1" fill="#8E8E96"/><rect x="70" y="5" width="1" height="1" fill="#8E8E96"/><rect x="72" y="2" width="1.2" height="1.5" fill="#C0C0C8"/><rect x="75" y="0" width="1" height="1" fill="#8E8E96"/><rect x="75" y="5" width="1" height="1" fill="#8E8E96"/><rect x="77" y="2" width="1.2" height="1.5" fill="#C0C0C8"/><rect x="80" y="0" width="1" height="1" fill="#8E8E96"/><rect x="80" y="5" width="1" height="1" fill="#8E8E96"/><rect x="82" y="2" width="1.2" height="1.5" fill="#C0C0C8"/><rect x="85" y="0" width="1" height="1" fill="#8E8E96"/><rect x="85" y="5" width="1" height="1" fill="#8E8E96"/><rect x="87" y="2" width="1.2" height="1.5" fill="#C0C0C8"/><rect x="90" y="0" width="1" height="1" fill="#8E8E96"/><rect x="90" y="5" width="1" height="1" fill="#8E8E96"/><rect x="92" y="2" width="1.2" height="1.5" fill="#C0C0C8"/><rect x="95" y="0" width="1" height="1" fill="#8E8E96"/><rect x="95" y="5" width="1" height="1" fill="#8E8E96"/><rect x="97" y="2" width="1.2" height="1.5" fill="#C0C0C8"/><rect x="100" y="0" width="1" height="1" fill="#8E8E96"/><rect x="100" y="5" width="1" height="1" fill="#8E8E96"/><rect x="102" y="2" width="1.2" height="1.5" fill="#C0C0C8"/><rect x="105" y="0" width="1" height="1" fill="#8E8E96"/><rect x="105" y="5" width="1" height="1" fill="#8E8E96"/><rect x="107" y="2" width="1.2" height="1.5" fill="#C0C0C8"/><rect x="110" y="0" width="1" height="1" fill="#8E8E96"/><rect x="110" y="5" width="1" height="1" fill="#8E8E96"/><rect x="112" y="2" width="1.2" height="1.5" fill="#C0C0C8"/><rect x="115" y="0" width="1" height="1" fill="#8E8E96"/><rect x="115" y="5" width="1" height="1" fill="#8E8E96"/><rect x="117" y="2" width="1.2" height="1.5" fill="#C0C0C8"/><rect x="120" y="0" width="1" height="1" fill="#8E8E96"/><rect x="120" y="5" width="1" height="1" fill="#8E8E96"/><rect x="122" y="2" width="1.2" height="1.5" fill="#C0C0C8"/><rect x="125" y="0" width="1" height="1" fill="#8E8E96"/><rect x="125" y="5" width="1" height="1" fill="#8E8E96"/><rect x="127" y="2" width="1.2" height="1.5" fill="#C0C0C8"/><rect x="130" y="0" width="1" height="1" fill="#8E8E96"/><rect x="130" y="5" width="1" height="1" fill="#8E8E96"/><rect x="132" y="2" width="1.2" height="1.5" fill="#C0C0C8"/><rect x="135" y="0" width="1" height="1" fill="#8E8E96"/><rect x="135" y="5" width="1" height="1" fill="#8E8E96"/><rect x="137" y="2" width="1.2" height="1.5" fill="#C0C0C8"/><rect x="140" y="0" width="1" height="1" fill="#8E8E96"/><rect x="140" y="5" width="1" height="1" fill="#8E8E96"/><rect x="142" y="2" width="1.2" height="1.5" fill="#C0C0C8"/><rect x="145" y="0" width="1" height="1" fill="#8E8E96"/><rect x="145" y="5" width="1" height="1" fill="#8E8E96"/><rect x="147" y="2" width="1.2" height="1.5" fill="#C0C0C8"/><rect x="150" y="0" width="1" height="1" fill="#8E8E96"/><rect x="150" y="5" width="1" height="1" fill="#8E8E96"/><rect x="152" y="2" width="1.2" height="1.5" fill="#C0C0C8"/><rect x="155" y="0" width="1" height="1" fill="#8E8E96"/><rect x="155" y="5" width="1" height="1" fill="#8E8E96"/><rect x="157" y="2" width="1.2" height="1.5" fill="#C0C0C8"/><rect x="160" y="0" width="1" height="1" fill="#8E8E96"/><rect x="160" y="5" width="1" height="1" fill="#8E8E96"/><rect x="162" y="2" width="1.2" height="1.5" fill="#C0C0C8"/><rect x="165" y="0" width="1" height="1" fill="#8E8E96"/><rect x="165" y="5" width="1" height="1" fill="#8E8E96"/><rect x="167" y="2" width="1.2" height="1.5" fill="#C0C0C8"/><rect x="170" y="0" width="1" height="1" fill="#8E8E96"/><rect x="170" y="5" width="1" height="1" fill="#8E8E96"/><rect x="172" y="2" width="1.2" height="1.5" fill="#C0C0C8"/></svg>
<svg style="position:absolute;left:1818px;top:100px;" width="11" height="6" viewBox="0 0 11 6"><path d="M0 0 H11 L5.5 5.5 Z" fill="#1E1E1E"/></svg>
<svg style="position:absolute;left:1839px;top:96px;" width="10" height="15" viewBox="0 0 10 15"><path d="M2.5 0.75 H7.5 M3 1 V7 M7 1 V7 M0.5 7.5 H9.5 M5 7.5 V14.5" stroke="#1E1E1E" stroke-width="1.5" fill="none"/><rect x="3" y="1" width="2" height="6" fill="#1E1E1E"/></svg>
<svg style="position:absolute;left:1859px;top:98px;" width="12" height="11" viewBox="0 0 12 11"><path d="M1 0.5 L11 10.5 M11 0.5 L1 10.5" stroke="#1E1E1E" stroke-width="1.7"/></svg>
<svg style="position:absolute;left:1457px;top:126px;" width="16" height="16" viewBox="0 0 16 16"><circle cx="7.5" cy="8" r="7.2" fill="#C6C6C6"/><path d="M3.5 8 L7 4.5 M3.5 8 L7 11.5 M3.8 8 H11.5" stroke="#EEEEF2" stroke-width="1.8" fill="none"/></svg>
<svg style="position:absolute;left:1484px;top:126px;" width="16" height="16" viewBox="0 0 16 16"><circle cx="7.5" cy="8" r="7.2" fill="#C6C6C6"/><path d="M11.5 8 L8 4.5 M11.5 8 L8 11.5 M11.2 8 H3.5" stroke="#EEEEF2" stroke-width="1.8" fill="none"/></svg>
<svg style="position:absolute;left:1510px;top:125px;" width="18" height="18" viewBox="0 0 18 18"><path d="M1 9 L9 1.5 L17 9 M3 7.5 V17 H15 V7.5 M13 3 V6" fill="none" stroke="#424242" stroke-width="1.5"/><rect x="7.5" y="11.5" width="3" height="5.5" fill="#424242"/></svg>
<svg style="position:absolute;left:1538px;top:123px;" width="19" height="19" viewBox="0 0 19 19"><path d="M7 2 H11 L12 0.5 H18 V12 H7 Z" fill="#DCB67A"/><rect x="0.75" y="7" width="11" height="10" fill="#EEEEF2" stroke="#424242" stroke-width="1.5"/><rect x="0.75" y="7" width="11" height="2.5" fill="#424242"/><path d="M2 5 V2.5 H6 M5 1 L6.5 2.5 L5 4" stroke="#00539C" stroke-width="1.3" fill="none"/><path d="M17 14 V16.5 H13 M14 15 L12.5 16.5 L14 18" stroke="#00539C" stroke-width="1.3" fill="none"/></svg>
<svg style="position:absolute;left:1563px;top:132px;" width="8" height="4" viewBox="0 0 8 4"><path d="M0 0 H8 L4 4 Z" fill="#717171"/></svg>
<div style="position:absolute;left:1579px;top:122px;width:1px;height:22px;background:#CCCEDB"></div>
<svg style="position:absolute;left:1591px;top:124px;" width="15" height="18" viewBox="0 0 15 18"><path d="M0 0 H4 L2 3 Z" fill="#424242"/><path d="M2 2 L4 6" stroke="#424242" stroke-width="1"/><circle cx="9" cy="11.5" r="5.5" fill="none" stroke="#424242" stroke-width="1.4"/><path d="M9 8 V11.5 H11.5" stroke="#424242" stroke-width="1.2" fill="none"/></svg>
<svg style="position:absolute;left:1616px;top:133px;" width="8" height="4" viewBox="0 0 8 4"><path d="M0 0 H8 L4 4 Z" fill="#717171"/></svg>
<svg style="position:absolute;left:1632px;top:126px;" width="16" height="15" viewBox="0 0 16 15"><path d="M15 4 H2 M5 1 L1.5 4 L5 7 M1 11 H14 M11 8 L14.5 11 L11 14" stroke="#424242" stroke-width="1.8" fill="none"/></svg>
<svg style="position:absolute;left:1659px;top:125px;" width="16" height="17" viewBox="0 0 16 17"><path d="M13.5 9.5 A6 6 0 1 1 9 3.5" fill="none" stroke="#00539C" stroke-width="2.2"/><path d="M7.5 0 L13 3.5 L8 7.5 Z" fill="#00539C"/></svg>
<svg style="position:absolute;left:1688px;top:126px;" width="15" height="15" viewBox="0 0 15 15"><rect x="0.75" y="6" width="8" height="8" fill="#EEEEF2" stroke="#424242" stroke-width="1.3"/><path d="M3.5 6 V3 H11.5 V11 H9 M6 3 V0.75 H14 V8.5 H11.5" fill="none" stroke="#424242" stroke-width="1.3"/><path d="M2.5 10 H7" stroke="#00539C" stroke-width="1.3"/></svg>
<svg style="position:absolute;left:1712px;top:124px;" width="18" height="18" viewBox="0 0 18 18"><path d="M0.75 10 V0.75 H9 L12 3.5" fill="none" stroke="#424242" stroke-width="1.3"/><path d="M5 5 H12.5 L17 9 V17.25 H5 Z" fill="#EEEEF2" stroke="#424242" stroke-width="1.3"/><path d="M7.5 10 H14 M7.5 12.5 H14 M7.5 15 H14" stroke="#424242" stroke-width="1.1"/></svg>
<div style="position:absolute;left:1740px;top:122px;width:1px;height:22px;background:#CCCEDB"></div>
<svg style="position:absolute;left:1751px;top:128px;" width="16" height="11" viewBox="0 0 16 11"><path d="M6 1 L1.5 5.5 L6 10 M10 1 L14.5 5.5 L10 10" fill="none" stroke="#424242" stroke-width="1.6"/></svg>
<svg style="position:absolute;left:1776px;top:124px;" width="19" height="19" viewBox="0 0 19 19"><path d="M2 17 L10 9" stroke="#424242" stroke-width="3.2" stroke-linecap="round"/><path d="M12.5 1.5 A5 5 0 1 0 17.5 6.5 L14.5 7.5 L11.5 4.5 Z" fill="#424242"/></svg>
<div style="position:absolute;left:1799px;top:119px;width:28px;height:29px;border:1px solid #3399FF;box-sizing:border-box;background:#EEEEF2"></div>
<div style="position:absolute;left:1803px;top:133px;width:20px;height:1.5px;background:#424242"></div>
<div style="position:absolute;left:1812px;top:131px;width:11px;height:5px;background:#424242"></div>
<div style="position:absolute;left:1447px;top:152px;width:433px;height:26px;background:#FFFFFF"></div>
<div style="position:absolute;left:1447px;top:151px;width:433px;height:1px;background:#CCCEDB"></div>
<div style="position:absolute;left:1447px;top:177px;width:433px;height:1px;background:#CCCEDB"></div>
<div class="t" style="left:1453px;top:155px;font-size:14.6px;color:#717171;font-weight:normal;font-family:'Liberation Sans', sans-serif;">Buscar en Explorador de soluciones (Ctrl+´)</div>
<svg style="position:absolute;left:1846px;top:156px;" width="16" height="16" viewBox="0 0 16 16"><circle cx="10" cy="6" r="4.6" fill="none" stroke="#424242" stroke-width="2"/><path d="M7 9 L1.5 14.5" stroke="#424242" stroke-width="2.8" stroke-linecap="round"/></svg>
<svg style="position:absolute;left:1868px;top:164px;" width="8" height="4" viewBox="0 0 8 4"><path d="M0 0 H8 L4 4 Z" fill="#717171"/></svg>
<div style="position:absolute;left:1447px;top:178px;width:433px;height:405px;background:#F5F5F5"></div>
<div style="position:absolute;left:1447px;top:203px;width:433px;height:24px;background:#CCCEDB"></div>
<svg style="position:absolute;left:1462px;top:183px;" width="20" height="18" viewBox="0 0 20 18"><path d="M3 0.75 H19 V17 H14 M3 0.75 V6" fill="none" stroke="#424242" stroke-width="1.4"/><rect x="3" y="0.75" width="16" height="2.5" fill="#424242"/><path d="M7 8 L10 10 V17 L7 19 L3 15 L1.5 16.2 L0.3 15.6 V11.4 L1.5 10.8 L3 12 Z M7 11 L5 13.5 L7 16 Z" fill="#865FC5" fill-rule="evenodd"/></svg>
<div class="t" style="left:1488px;top:183px;font-size:14.7px;color:#1E1E1E;font-weight:normal;font-family:'Liberation Sans', sans-serif;">Solución &quot;OpenAndParseFile&quot; (1 de 1 proyecto)</div>
<svg style="position:absolute;left:1460px;top:210px;" width="10" height="10" viewBox="0 0 10 10"><path d="M9 0 V9 H0 Z" fill="#1E1E1E"/></svg>
<svg style="position:absolute;left:1485px;top:207px;" width="20" height="18" viewBox="0 0 20 18"><rect x="0.75" y="0.75" width="18.5" height="16.5" fill="#F5F5F5" stroke="#388A34" stroke-width="1.5"/><text x="10" y="12.5" font-family="Liberation Sans" font-size="10" font-weight="bold" fill="#424242" text-anchor="middle">C#</text></svg>
<div class="t" style="left:1511px;top:206px;font-size:14.5px;color:#1E1E1E;font-weight:bold;font-family:'Liberation Sans', sans-serif;">OpenAndParseFile</div>
<svg style="position:absolute;left:1483px;top:233px;" width="8" height="13" viewBox="0 0 8 13"><path d="M0.7 0.7 L6 6 L0.7 11.3 Z" fill="none" stroke="#1E1E1E" stroke-width="1.3"/></svg>
<svg style="position:absolute;left:1508px;top:231px;" width="19" height="16" viewBox="0 0 19 16"><path d="M2 14 L9 7" stroke="#424242" stroke-width="3.2" stroke-linecap="round"/><path d="M12 1 A4.5 4.5 0 1 0 16.5 5.5 L13.8 6.5 L11 3.8 Z" fill="#424242"/></svg>
<div class="t" style="left:1533px;top:229px;font-size:14.6px;color:#1E1E1E;font-weight:normal;font-family:'Liberation Sans', sans-serif;">Properties</div>
<svg style="position:absolute;left:1483px;top:256px;" width="8" height="13" viewBox="0 0 8 13"><path d="M0.7 0.7 L6 6 L0.7 11.3 Z" fill="none" stroke="#1E1E1E" stroke-width="1.3"/></svg>
<svg style="position:absolute;left:1508px;top:257px;" width="19" height="9" viewBox="0 0 19 9"><rect x="0" y="1.5" width="5" height="5" fill="#424242"/><rect x="10" y="0" width="8" height="8" fill="#424242"/><rect x="6.5" y="3.5" width="2" height="1.2" fill="#424242"/></svg>
<div class="t" style="left:1533px;top:252px;font-size:14.5px;color:#1E1E1E;font-weight:normal;font-family:'Liberation Sans', sans-serif;">Referencias</div>
<svg style="position:absolute;left:1508px;top:276px;" width="18" height="19" viewBox="0 0 18 19"><path d="M4 0.75 H12 L16.25 5 V17.25 H5 V13" fill="#F0F0F0" stroke="#424242" stroke-width="1.3"/><path d="M12 0.75 V5 H16.25" fill="none" stroke="#424242" stroke-width="1.1"/><path d="M2 5.5 Q0 7 0.5 9 Q1.5 11 3.5 11 Q5.5 11 6.5 9 Q7 7 5 5.5 V8 H2 Z" fill="#424242"/><rect x="2.3" y="10.5" width="2.4" height="7" fill="#424242"/></svg>
<div class="t" style="left:1533px;top:275px;font-size:14.5px;color:#1E1E1E;font-weight:normal;font-family:'Liberation Sans', sans-serif;">App.config</div>
<svg style="position:absolute;left:1483px;top:302px;" width="8" height="13" viewBox="0 0 8 13"><path d="M0.7 0.7 L6 6 L0.7 11.3 Z" fill="none" stroke="#1E1E1E" stroke-width="1.3"/></svg>
<svg style="position:absolute;left:1510px;top:303px;" width="16" height="10" viewBox="0 0 16 10"><path d="M6.5 1.8 Q5.5 1 4 1 Q1 1 1 4.75 Q1 8.5 4 8.5 Q5.5 8.5 6.5 7.7" fill="none" stroke="#388A34" stroke-width="2"/><path d="M10 0 V6 M13 0 V6 M8.5 2 H14.5 M8.5 4.2 H14.5" stroke="#388A34" stroke-width="1.5"/></svg>
<div class="t" style="left:1533px;top:298px;font-size:14.3px;color:#1E1E1E;font-weight:normal;font-family:'Liberation Sans', sans-serif;">Person.cs</div>
<svg style="position:absolute;left:1483px;top:325px;" width="8" height="13" viewBox="0 0 8 13"><path d="M0.7 0.7 L6 6 L0.7 11.3 Z" fill="none" stroke="#1E1E1E" stroke-width="1.3"/></svg>
<svg style="position:absolute;left:1510px;top:326px;" width="16" height="10" viewBox="0 0 16 10"><path d="M6.5 1.8 Q5.5 1 4 1 Q1 1 1 4.75 Q1 8.5 4 8.5 Q5.5 8.5 6.5 7.7" fill="none" stroke="#388A34" stroke-width="2"/><path d="M10 0 V6 M13 0 V6 M8.5 2 H14.5 M8.5 4.2 H14.5" stroke="#388A34" stroke-width="1.5"/></svg>
<div class="t" style="left:1533px;top:321px;font-size:14.1px;color:#1E1E1E;font-weight:normal;font-family:'Liberation Sans', sans-serif;">Program.cs</div>
<div style="position:absolute;left:1447px;top:583px;width:180px;height:25px;background:#F5F5F5;border:1px solid #CCCEDB;border-top:none;box-sizing:border-box"></div>
<div class="t" style="left:1453px;top:584px;font-size:15px;color:#0E70C0;font-weight:normal;font-family:'Liberation Sans', sans-serif;">Explorador de soluciones</div>
<div class="t" style="left:1634px;top:584px;font-size:15px;color:#1E1E1E;font-weight:normal;font-family:'Liberation Sans', sans-serif;">Team Explorer</div>
<div style="position:absolute;left:1446px;top:616px;width:435px;height:377px;border:1px solid #CCCEDB;box-sizing:border-box;background:#F5F5F5"></div>
<div style="position:absolute;left:1447px;top:617px;width:433px;height:27px;background:#EEEEF2"></div>
<div class="t" style="left:1451px;top:620px;font-size:15px;color:#1E1E1E;font-weight:normal;font-family:'Liberation Sans', sans-serif;">Propiedades</div>
<svg style="position:absolute;left:1544px;top:627px;" width="263" height="6" viewBox="0 0 263 6"><rect x="0" y="0" width="1" height="1" fill="#8E8E96"/><rect x="0" y="5" width="1" height="1" fill="#8E8E96"/><rect x="2" y="2" width="1.2" height="1.5" fill="#C0C0C8"/><rect x="5" y="0" width="1" height="1" fill="#8E8E96"/><rect x="5" y="5" width="1" height="1" fill="#8E8E96"/><rect x="7" y="2" width="1.2" height="1.5" fill="#C0C0C8"/><rect x="10" y="0" width="1" height="1" fill="#8E8E96"/><rect x="10" y="5" width="1" height="1" fill="#8E8E96"/><rect x="12" y="2" width="1.2" height="1.5" fill="#C0C0C8"/><rect x="15" y="0" width="1" height="1" fill="#8E8E96"/><rect x="15" y="5" width="1" height="1" fill="#8E8E96"/><rect x="17" y="2" width="1.2" height="1.5" fill="#C0C0C8"/><rect x="20" y="0" width="1" height="1" fill="#8E8E96"/><rect x="20" y="5" width="1" height="1" fill="#8E8E96"/><rect x="22" y="2" width="1.2" height="1.5" fill="#C0C0C8"/><rect x="25" y="0" width="1" height="1" fill="#8E8E96"/><rect x="25" y="5" width="1" height="1" fill="#8E8E96"/><rect x="27" y="2" width="1.2" height="1.5" fill="#C0C0C8"/><rect x="30" y="0" width="1" height="1" fill="#8E8E96"/><rect x="30" y="5" width="1" height="1" fill="#8E8E96"/><rect x="32" y="2" width="1.2" height="1.5" fill="#C0C0C8"/><rect x="35" y="0" width="1" height="1" fill="#8E8E96"/><rect x="35" y="5" width="1" height="1" fill="#8E8E96"/><rect x="37" y="2" width="1.2" height="1.5" fill="#C0C0C8"/><rect x="40" y="0" width="1" height="1" fill="#8E8E96"/><rect x="40" y="5" width="1" height="1" fill="#8E8E96"/><rect x="42" y="2" width="1.2" height="1.5" fill="#C0C0C8"/><rect x="45" y="0" width="1" height="1" fill="#8E8E96"/><rect x="45" y="5" width="1" height="1" fill="#8E8E96"/><rect x="47" y="2" width="1.2" height="1.5" fill="#C0C0C8"/><rect x="50" y="0" width="1" height="1" fill="#8E8E96"/><rect x="50" y="5" width="1" height="1" fill="#8E8E96"/><rect x="52" y="2" width="1.2" height="1.5" fill="#C0C0C8"/><rect x="55" y="0" width="1" height="1" fill="#8E8E96"/><rect x="55" y="5" width="1" height="1" fill="#8E8E96"/><rect x="57" y="2" width="1.2" height="1.5" fill="#C0C0C8"/><rect x="60" y="0" width="1" height="1" fill="#8E8E96"/><rect x="60" y="5" width="1" height="1" fill="#8E8E96"/><rect x="62" y="2" width="1.2" height="1.5" fill="#C0C0C8"/><rect x="65" y="0" width="1" height="1" fill="#8E8E96"/><rect x="65" y="5" width="1" height="1" fill="#8E8E96"/><rect x="67" y="2" width="1.2" height="1.5" fill="#C0C0C8"/><rect x="70" y="0" width="1" height="1" fill="#8E8E96"/><rect x="70" y="5" width="1" height="1" fill="#8E8E96"/><rect x="72" y="2" width="1.2" height="1.5" fill="#C0C0C8"/><rect x="75" y="0" width="1" height="1" fill="#8E8E96"/><rect x="75" y="5" width="1" height="1" fill="#8E8E96"/><rect x="77" y="2" width="1.2" height="1.5" fill="#C0C0C8"/><rect x="80" y="0" width="1" height="1" fill="#8E8E96"/><rect x="80" y="5" width="1" height="1" fill="#8E8E96"/><rect x="82" y="2" width="1.2" height="1.5" fill="#C0C0C8"/><rect x="85" y="0" width="1" height="1" fill="#8E8E96"/><rect x="85" y="5" width="1" height="1" fill="#8E8E96"/><rect x="87" y="2" width="1.2" height="1.5" fill="#C0C0C8"/><rect x="90" y="0" width="1" height="1" fill="#8E8E96"/><rect x="90" y="5" width="1" height="1" fill="#8E8E96"/><rect x="92" y="2" width="1.2" height="1.5" fill="#C0C0C8"/><rect x="95" y="0" width="1" height="1" fill="#8E8E96"/><rect x="95" y="5" width="1" height="1" fill="#8E8E96"/><rect x="97" y="2" width="1.2" height="1.5" fill="#C0C0C8"/><rect x="100" y="0" width="1" height="1" fill="#8E8E96"/><rect x="100" y="5" width="1" height="1" fill="#8E8E96"/><rect x="102" y="2" width="1.2" height="1.5" fill="#C0C0C8"/><rect x="105" y="0" width="1" height="1" fill="#8E8E96"/><rect x="105" y="5" width="1" height="1" fill="#8E8E96"/><rect x="107" y="2" width="1.2" height="1.5" fill="#C0C0C8"/><rect x="110" y="0" width="1" height="1" fill="#8E8E96"/><rect x="110" y="5" width="1" height="1" fill="#8E8E96"/><rect x="112" y="2" width="1.2" height="1.5" fill="#C0C0C8"/><rect x="115" y="0" width="1" height="1" fill="#8E8E96"/><rect x="115" y="5" width="1" height="1" fill="#8E8E96"/><rect x="117" y="2" width="1.2" height="1.5" fill="#C0C0C8"/><rect x="120" y="0" width="1" height="1" fill="#8E8E96"/><rect x="120" y="5" width="1" height="1" fill="#8E8E96"/><rect x="122" y="2" width="1.2" height="1.5" fill="#C0C0C8"/><rect x="125" y="0" width="1" height="1" fill="#8E8E96"/><rect x="125" y="5" width="1" height="1" fill="#8E8E96"/><rect x="127" y="2" width="1.2" height="1.5" fill="#C0C0C8"/><rect x="130" y="0" width="1" height="1" fill="#8E8E96"/><rect x="130" y="5" width="1" height="1" fill="#8E8E96"/><rect x="132" y="2" width="1.2" height="1.5" fill="#C0C0C8"/><rect x="135" y="0" width="1" height="1" fill="#8E8E96"/><rect x="135" y="5" width="1" height="1" fill="#8E8E96"/><rect x="137" y="2" width="1.2" height="1.5" fill="#C0C0C8"/><rect x="140" y="0" width="1" height="1" fill="#8E8E96"/><rect x="140" y="5" width="1" height="1" fill="#8E8E96"/><rect x="142" y="2" width="1.2" height="1.5" fill="#C0C0C8"/><rect x="145" y="0" width="1" height="1" fill="#8E8E96"/><rect x="145" y="5" width="1" height="1" fill="#8E8E96"/><rect x="147" y="2" width="1.2" height="1.5" fill="#C0C0C8"/><rect x="150" y="0" width="1" height="1" fill="#8E8E96"/><rect x="150" y="5" width="1" height="1" fill="#8E8E96"/><rect x="152" y="2" width="1.2" height="1.5" fill="#C0C0C8"/><rect x="155" y="0" width="1" height="1" fill="#8E8E96"/><rect x="155" y="5" width="1" height="1" fill="#8E8E96"/><rect x="157" y="2" width="1.2" height="1.5" fill="#C0C0C8"/><rect x="160" y="0" width="1" height="1" fill="#8E8E96"/><rect x="160" y="5" width="1" height="1" fill="#8E8E96"/><rect x="162" y="2" width="1.2" height="1.5" fill="#C0C0C8"/><rect x="165" y="0" width="1" height="1" fill="#8E8E96"/><rect x="165" y="5" width="1" height="1" fill="#8E8E96"/><rect x="167" y="2" width="1.2" height="1.5" fill="#C0C0C8"/><rect x="170" y="0" width="1" height="1" fill="#8E8E96"/><rect x="170" y="5" width="1" height="1" fill="#8E8E96"/><rect x="172" y="2" width="1.2" height="1.5" fill="#C0C0C8"/><rect x="175" y="0" width="1" height="1" fill="#8E8E96"/><rect x="175" y="5" width="1" height="1" fill="#8E8E96"/><rect x="177" y="2" width="1.2" height="1.5" fill="#C0C0C8"/><rect x="180" y="0" width="1" height="1" fill="#8E8E96"/><rect x="180" y="5" width="1" height="1" fill="#8E8E96"/><rect x="182" y="2" width="1.2" height="1.5" fill="#C0C0C8"/><rect x="185" y="0" width="1" height="1" fill="#8E8E96"/><rect x="185" y="5" width="1" height="1" fill="#8E8E96"/><rect x="187" y="2" width="1.2" height="1.5" fill="#C0C0C8"/><rect x="190" y="0" width="1" height="1" fill="#8E8E96"/><rect x="190" y="5" width="1" height="1" fill="#8E8E96"/><rect x="192" y="2" width="1.2" height="1.5" fill="#C0C0C8"/><rect x="195" y="0" width="1" height="1" fill="#8E8E96"/><rect x="195" y="5" width="1" height="1" fill="#8E8E96"/><rect x="197" y="2" width="1.2" height="1.5" fill="#C0C0C8"/><rect x="200" y="0" width="1" height="1" fill="#8E8E96"/><rect x="200" y="5" width="1" height="1" fill="#8E8E96"/><rect x="202" y="2" width="1.2" height="1.5" fill="#C0C0C8"/><rect x="205" y="0" width="1" height="1" fill="#8E8E96"/><rect x="205" y="5" width="1" height="1" fill="#8E8E96"/><rect x="207" y="2" width="1.2" height="1.5" fill="#C0C0C8"/><rect x="210" y="0" width="1" height="1" fill="#8E8E96"/><rect x="210" y="5" width="1" height="1" fill="#8E8E96"/><rect x="212" y="2" width="1.2" height="1.5" fill="#C0C0C8"/><rect x="215" y="0" width="1" height="1" fill="#8E8E96"/><rect x="215" y="5" width="1" height="1" fill="#8E8E96"/><rect x="217" y="2" width="1.2" height="1.5" fill="#C0C0C8"/><rect x="220" y="0" width="1" height="1" fill="#8E8E96"/><rect x="220" y="5" width="1" height="1" fill="#8E8E96"/><rect x="222" y="2" width="1.2" height="1.5" fill="#C0C0C8"/><rect x="225" y="0" width="1" height="1" fill="#8E8E96"/><rect x="225" y="5" width="1" height="1" fill="#8E8E96"/><rect x="227" y="2" width="1.2" height="1.5" fill="#C0C0C8"/><rect x="230" y="0" width="1" height="1" fill="#8E8E96"/><rect x="230" y="5" width="1" height="1" fill="#8E8E96"/><rect x="232" y="2" width="1.2" height="1.5" fill="#C0C0C8"/><rect x="235" y="0" width="1" height="1" fill="#8E8E96"/><rect x="235" y="5" width="1" height="1" fill="#8E8E96"/><rect x="237" y="2" width="1.2" height="1.5" fill="#C0C0C8"/><rect x="240" y="0" width="1" height="1" fill="#8E8E96"/><rect x="240" y="5" width="1" height="1" fill="#8E8E96"/><rect x="242" y="2" width="1.2" height="1.5" fill="#C0C0C8"/><rect x="245" y="0" width="1" height="1" fill="#8E8E96"/><rect x="245" y="5" width="1" height="1" fill="#8E8E96"/><rect x="247" y="2" width="1.2" height="1.5" fill="#C0C0C8"/><rect x="250" y="0" width="1" height="1" fill="#8E8E96"/><rect x="250" y="5" width="1" height="1" fill="#8E8E96"/><rect x="252" y="2" width="1.2" height="1.5" fill="#C0C0C8"/><rect x="255" y="0" width="1" height="1" fill="#8E8E96"/><rect x="255" y="5" width="1" height="1" fill="#8E8E96"/><rect x="257" y="2" width="1.2" height="1.5" fill="#C0C0C8"/></svg>
<svg style="position:absolute;left:1818px;top:627px;" width="11" height="6" viewBox="0 0 11 6"><path d="M0 0 H11 L5.5 5.5 Z" fill="#1E1E1E"/></svg>
<svg style="position:absolute;left:1839px;top:623px;" width="10" height="15" viewBox="0 0 10 15"><path d="M2.5 0.75 H7.5 M3 1 V7 M7 1 V7 M0.5 7.5 H9.5 M5 7.5 V14.5" stroke="#1E1E1E" stroke-width="1.5" fill="none"/><rect x="3" y="1" width="2" height="6" fill="#1E1E1E"/></svg>
<svg style="position:absolute;left:1859px;top:625px;" width="12" height="11" viewBox="0 0 12 11"><path d="M1 0.5 L11 10.5 M11 0.5 L1 10.5" stroke="#1E1E1E" stroke-width="1.7"/></svg>
<div style="position:absolute;left:1447px;top:644px;width:433px;height:28px;background:#FFFFFF"></div>
<svg style="position:absolute;left:1865px;top:656px;" width="8" height="4" viewBox="0 0 8 4"><path d="M0 0 H8 L4 4 Z" fill="#717171"/></svg>
<div style="position:absolute;left:1447px;top:672px;width:433px;height:33px;background:#EEEEF2"></div>
<div style="position:absolute;left:1450px;top:674px;width:29px;height:28px;border:1px solid #3399FF;box-sizing:border-box;background:#EEEEF2"></div>
<svg style="position:absolute;left:1456px;top:680px;" width="18" height="18" viewBox="0 0 18 18"><rect x="0" y="0" width="5" height="5" fill="#1E1E1E"/><rect x="0" y="11.5" width="5" height="5" fill="#1E1E1E"/><path d="M1.5 2.5 H3.5 M2.5 1.5 V3.5 M1.5 14 H3.5 M2.5 13 V15" stroke="#fff" stroke-width="0.9"/><path d="M7 0.5 H13 M7 2.5 H17 M7 4.5 H17 M7 6.5 H17 M7 8.5 H17 M7 10.5 H17 M7 12.5 H13 M7 15.5 H13 M15 15.5 H17" stroke="#1E1E1E" stroke-width="1"/></svg>
<svg style="position:absolute;left:1485px;top:680px;" width="18" height="18" viewBox="0 0 18 18"><rect x="0" y="0" width="8.5" height="8.5" fill="#424242"/><path d="M2 7.5 L4.25 1.5 L6.5 7.5 M3 5.5 H5.5" stroke="#EEEEF2" stroke-width="1" fill="none"/><path d="M1 10.5 H7 L1.5 16.5 H7.5" stroke="#424242" stroke-width="2" fill="none"/><path d="M13.5 4 V15 M10.5 11.5 L13.5 15.5 L16.5 11.5" stroke="#00539C" stroke-width="2" fill="none"/></svg>
<div style="position:absolute;left:1511px;top:676px;width:1px;height:25px;background:#CCCEDB"></div>
<svg style="position:absolute;left:1520px;top:678px;" width="18" height="20" viewBox="0 0 18 20"><path d="M2 18 L9.5 10.5" stroke="#A0A0A0" stroke-width="3.4" stroke-linecap="round"/><path d="M12.5 1.5 A5.5 5.5 0 1 0 17.5 6.5 L14.5 8 L11 4.5 Z" fill="#A0A0A0"/></svg>
<div style="position:absolute;left:1447px;top:913px;width:433px;height:1px;background:#E5E5EA"></div>
<div style="position:absolute;left:0px;top:1000px;width:1919px;height:29px;background:#007ACC"></div>
<svg style="position:absolute;left:5px;top:1009px;" width="20" height="14" viewBox="0 0 20 14"><path d="M4.5 0.75 H19 L15.5 13.25 H1 Z" fill="none" stroke="#fff" stroke-width="1.4"/></svg>
<div class="t" style="left:36px;top:1006px;font-size:14.7px;color:#FFFFFF;font-weight:normal;font-family:'Liberation Sans', sans-serif;">Elementos guardados</div>
<svg style="position:absolute;left:1574px;top:1007px;" width="13" height="16" viewBox="0 0 13 16"><path d="M6.5 15.5 V3.5" stroke="#D8D8D8" stroke-width="2.2"/><path d="M1 7.5 L6.5 1.5 L12 7.5" stroke="#D8D8D8" stroke-width="2.2" fill="none"/></svg>
<div class="t" style="left:1597px;top:1006px;font-size:15.3px;color:#FFFFFF;font-weight:normal;font-family:'Liberation Sans', sans-serif;">Agregar al control de código fuente</div>
<svg style="position:absolute;left:1843px;top:1012px;" width="10" height="6" viewBox="0 0 10 6"><path d="M0 6 L5 0 L10 6 Z" fill="#fff"/></svg>
<svg style="position:absolute;left:1880px;top:1006px;" width="17" height="17" viewBox="0 0 17 17"><path d="M8.5 0.5 Q3 1 3 7 V10.5 L1 13.5 H16 L14 10.5 V7 Q14 1 8.5 0.5 Z" fill="#D8D8D8"/><path d="M6.3 14.5 Q8.5 17.5 10.7 14.5 Z" fill="#D8D8D8"/></svg>
</body></html>
